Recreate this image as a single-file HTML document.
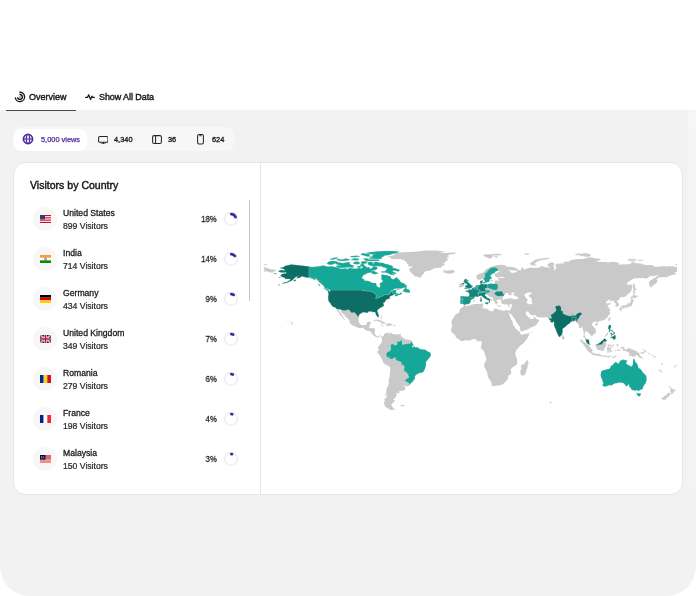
<!DOCTYPE html>
<html lang="en">
<head>
<meta charset="utf-8">
<title>Visitors by Country</title>
<style>
*{box-sizing:border-box;margin:0;padding:0}
html,body{width:696px;height:596px;overflow:hidden;background:#fff}
body{font-family:"Liberation Sans",sans-serif;color:#1c1c1e;position:relative}
.abs{position:absolute}
.tab,.ptxt,.title,.cname,.cvis,.pct{will-change:transform}
.tab{position:absolute;top:91.2px;height:12px;line-height:12px;font-size:9px;white-space:nowrap;color:#18181b;-webkit-text-stroke:0.4px #18181b}
.uline{position:absolute;left:6px;top:109.6px;width:70px;height:1.1px;background:#4a4a4c;z-index:3}
.page{position:absolute;left:0;top:110px;width:696px;height:486px;background:#f2f2f2;border-radius:0 0 30px 30px}
.pills{position:absolute;left:12.5px;top:127.3px;width:221.5px;height:24.2px;background:#f7f7f7;border-radius:8px}
.pill1{position:absolute;left:14px;top:128.5px;width:73px;height:22.5px;background:#fff;border-radius:7px}
.ptxt{position:absolute;top:133.6px;height:12px;line-height:12px;font-size:7.4px;white-space:nowrap;color:#202024;-webkit-text-stroke:0.34px #202024}
.card{position:absolute;left:13.4px;top:162.2px;width:669.2px;height:332.8px;background:#fff;border:1px solid #e6e6e6;border-radius:13px}
.divider{position:absolute;left:260px;top:163px;width:1px;height:331px;background:#e6e6e6}
.title{position:absolute;left:30px;top:178.2px;height:14px;line-height:14px;font-size:10.55px;white-space:nowrap;color:#17171a;-webkit-text-stroke:0.42px #17171a}
.row{position:absolute;left:0;width:260px;height:40px}
.flagc{position:absolute;left:33px;top:8px;width:24px;height:24px;border-radius:50%;background:#f7f7f7}
.flag{position:absolute;left:40px;top:16px;width:11px;height:8px;overflow:hidden}
.cname{position:absolute;left:63px;top:8.7px;height:11px;line-height:11px;font-size:8.65px;white-space:nowrap;color:#1b1b1f;-webkit-text-stroke:0.3px #1b1b1f}
.cvis{position:absolute;left:63px;top:21.8px;height:11px;line-height:11px;font-size:8.65px;white-space:nowrap;color:#2a2a2e;-webkit-text-stroke:0.24px #2a2a2e}
.pct{position:absolute;right:43.4px;top:14.9px;height:11px;line-height:11px;font-size:8.9px;white-space:nowrap;color:#1b1b1f;text-align:right;-webkit-text-stroke:0.3px #1b1b1f;transform:scaleX(.88);transform-origin:100% 50%}
.donut{position:absolute;left:222.9px;top:12.2px;width:16px;height:16px}
.scroll{position:absolute;left:248.8px;top:200px;width:1.4px;height:101px;background:#c4c4c4;border-radius:1px}
</style>
</head>
<body>
<!-- tabs -->
<svg class="abs" style="left:14.1px;top:90.8px" width="11.8" height="11.8" viewBox="0 0 24 24" fill="none" stroke="#18181b" stroke-width="2.8" stroke-linecap="round"><path d="M12 2.5a9.5 9.5 0 1 1-9.3 11.4"/><path d="M12 7a5 5 0 1 1-4.6 7"/><circle cx="12" cy="12" r="1.3" fill="#18181b" stroke="none"/></svg>
<div class="tab" style="left:29.2px">Overview</div>
<svg class="abs" style="left:84.6px;top:92px" width="10" height="10" viewBox="0 0 22 22" fill="none" stroke="#18181b" stroke-width="2.7" stroke-linecap="round" stroke-linejoin="round"><path d="M1.5 12h4l2.6-6 4.2 10.5 2.8-7.5 1.6 3h3.8"/></svg>
<div class="tab" style="left:98.6px;letter-spacing:-0.08px">Show All Data</div>
<div class="uline"></div>

<div class="page"></div>
<div class="abs" style="left:688px;top:110px;width:8px;height:450px;background:linear-gradient(#f6f6f6,#f4f4f4 60%,#f2f2f2)"></div>
<div class="pills"></div>
<div class="pill1"></div>

<svg class="abs" style="left:21.7px;top:133.3px" width="12" height="12" viewBox="0 0 24 24" fill="none" stroke="#4b2a9b" stroke-width="3.2"><circle cx="12" cy="12" r="9.2" fill="#e7e0f7"/><ellipse cx="12" cy="12" rx="3.6" ry="9.2" stroke-width="2"/><path d="M2.5 12h19" stroke-width="2"/></svg>
<svg class="abs" style="left:97.6px;top:135.5px" width="10.6" height="8.6" viewBox="0 0 21.2 17.2" fill="none" stroke="#26262a" stroke-width="2.1" stroke-linecap="round" stroke-linejoin="round"><rect x="1.2" y="1.2" width="18.8" height="11.4" rx="2.6"/><path d="M6.2 15.9h8.8M10.6 12.8v3"/></svg>
<svg class="abs" style="left:151.6px;top:135.2px" width="10" height="9" viewBox="0 0 20 18" fill="none" stroke="#26262a" stroke-width="2.1" stroke-linecap="round" stroke-linejoin="round"><rect x="1.2" y="1.2" width="17.6" height="15.6" rx="3"/><path d="M7.2 1.2v15.6"/></svg>
<svg class="abs" style="left:196.8px;top:134.3px" width="7" height="10.6" viewBox="0 0 14 21.2" fill="none" stroke="#26262a" stroke-width="2.1" stroke-linecap="round" stroke-linejoin="round"><rect x="1.2" y="1.2" width="11.6" height="18.8" rx="2.8"/><path d="M5.5 3.6h3"/></svg>

<div class="ptxt" style="left:40.5px;color:#4c2a9c;-webkit-text-stroke:0.25px #4c2a9c">5,000 views</div>
<div class="ptxt" style="left:114px">4,340</div>
<div class="ptxt" style="left:168px">36</div>
<div class="ptxt" style="left:211.8px">624</div>

<div class="card"></div>
<div class="divider"></div>
<div class="title">Visitors by Country</div>
<div class="scroll"></div>
<div class="row" style="top:199px"><div class="flagc"></div><svg class="flag" viewBox="0 0 11 8"><rect width="11" height="8" fill="#fff"/><g fill="#c8102e"><rect y="0" width="11" height="1.15"/><rect y="2.28" width="11" height="1.15"/><rect y="4.57" width="11" height="1.15"/><rect y="6.85" width="11" height="1.15"/></g><rect width="5" height="4.4" fill="#3c3b6e"/></svg><div class="cname">United States</div><div class="cvis">899 Visitors</div><div class="pct">18%</div><svg class="donut" viewBox="0 0 16 16"><circle cx="8" cy="8" r="6.4" fill="none" stroke="#efeef4" stroke-width="1.6"/><circle cx="8" cy="8" r="4.9" fill="none" stroke="#4b2a9b" stroke-width="2.8" stroke-linecap="round" stroke-dasharray="5.24 30.79" transform="rotate(-86 8 8)"/></svg></div>
<div class="row" style="top:239px"><div class="flagc"></div><svg class="flag" viewBox="0 0 11 8"><rect width="11" height="8" fill="#fff"/><rect width="11" height="2.67" fill="#ff9933"/><rect y="5.33" width="11" height="2.67" fill="#138808"/><circle cx="5.5" cy="4" r="1" fill="none" stroke="#000088" stroke-width=".5"/></svg><div class="cname">India</div><div class="cvis">714 Visitors</div><div class="pct">14%</div><svg class="donut" viewBox="0 0 16 16"><circle cx="8" cy="8" r="6.4" fill="none" stroke="#efeef4" stroke-width="1.6"/><circle cx="8" cy="8" r="4.9" fill="none" stroke="#4b2a9b" stroke-width="2.8" stroke-linecap="round" stroke-dasharray="4.01 30.79" transform="rotate(-86 8 8)"/></svg></div>
<div class="row" style="top:279px"><div class="flagc"></div><svg class="flag" viewBox="0 0 11 8"><rect width="11" height="2.67" fill="#000"/><rect y="2.67" width="11" height="2.67" fill="#dd0000"/><rect y="5.33" width="11" height="2.67" fill="#ffce00"/></svg><div class="cname">Germany</div><div class="cvis">434 Visitors</div><div class="pct">9%</div><svg class="donut" viewBox="0 0 16 16"><circle cx="8" cy="8" r="6.4" fill="none" stroke="#efeef4" stroke-width="1.6"/><circle cx="8" cy="8" r="4.9" fill="none" stroke="#4b2a9b" stroke-width="2.8" stroke-linecap="round" stroke-dasharray="2.47 30.79" transform="rotate(-86 8 8)"/></svg></div>
<div class="row" style="top:319px"><div class="flagc"></div><svg class="flag" viewBox="0 0 11 8"><rect width="11" height="8" fill="#012169"/><path d="M0,0L11,8M11,0L0,8" stroke="#fff" stroke-width="1.6"/><path d="M0,0L11,8M11,0L0,8" stroke="#c8102e" stroke-width=".6"/><path d="M5.5,0V8M0,4H11" stroke="#fff" stroke-width="2.6"/><path d="M5.5,0V8M0,4H11" stroke="#c8102e" stroke-width="1.5"/></svg><div class="cname">United Kingdom</div><div class="cvis">349 Visitors</div><div class="pct">7%</div><svg class="donut" viewBox="0 0 16 16"><circle cx="8" cy="8" r="6.4" fill="none" stroke="#efeef4" stroke-width="1.6"/><circle cx="8" cy="8" r="4.9" fill="none" stroke="#4b2a9b" stroke-width="2.8" stroke-linecap="round" stroke-dasharray="1.86 30.79" transform="rotate(-86 8 8)"/></svg></div>
<div class="row" style="top:359px"><div class="flagc"></div><svg class="flag" viewBox="0 0 11 8"><rect width="3.67" height="8" fill="#002b7f"/><rect x="3.67" width="3.67" height="8" fill="#fcd116"/><rect x="7.33" width="3.67" height="8" fill="#ce1126"/></svg><div class="cname">Romania</div><div class="cvis">279 Visitors</div><div class="pct">6%</div><svg class="donut" viewBox="0 0 16 16"><circle cx="8" cy="8" r="6.4" fill="none" stroke="#efeef4" stroke-width="1.6"/><circle cx="8" cy="8" r="4.9" fill="none" stroke="#4b2a9b" stroke-width="2.8" stroke-linecap="round" stroke-dasharray="1.55 30.79" transform="rotate(-86 8 8)"/></svg></div>
<div class="row" style="top:399px"><div class="flagc"></div><svg class="flag" viewBox="0 0 11 8"><rect width="3.67" height="8" fill="#002395"/><rect x="3.67" width="3.67" height="8" fill="#fff"/><rect x="7.33" width="3.67" height="8" fill="#ed2939"/></svg><div class="cname">France</div><div class="cvis">198 Visitors</div><div class="pct">4%</div><svg class="donut" viewBox="0 0 16 16"><circle cx="8" cy="8" r="6.4" fill="none" stroke="#efeef4" stroke-width="1.6"/><circle cx="8" cy="8" r="4.9" fill="none" stroke="#4b2a9b" stroke-width="2.8" stroke-linecap="round" stroke-dasharray="0.93 30.79" transform="rotate(-86 8 8)"/></svg></div>
<div class="row" style="top:439px"><div class="flagc"></div><svg class="flag" viewBox="0 0 11 8"><rect width="11" height="8" fill="#fff"/><g fill="#cc0001"><rect y="0" width="11" height=".6"/><rect y="1.14" width="11" height=".6"/><rect y="2.28" width="11" height=".6"/><rect y="3.42" width="11" height=".6"/><rect y="4.57" width="11" height=".6"/><rect y="5.71" width="11" height=".6"/><rect y="6.85" width="11" height=".6"/></g><rect width="5.5" height="4.55" fill="#010066"/><circle cx="2.4" cy="2.3" r="1.3" fill="#fc0"/><circle cx="2.85" cy="2.3" r="1.1" fill="#010066"/><circle cx="3.9" cy="2.3" r=".6" fill="#fc0"/></svg><div class="cname">Malaysia</div><div class="cvis">150 Visitors</div><div class="pct">3%</div><svg class="donut" viewBox="0 0 16 16"><circle cx="8" cy="8" r="6.4" fill="none" stroke="#efeef4" stroke-width="1.6"/><circle cx="8" cy="8" r="4.9" fill="none" stroke="#4b2a9b" stroke-width="2.8" stroke-linecap="round" stroke-dasharray="0.62 30.79" transform="rotate(-86 8 8)"/></svg></div>
<svg class="abs" style="left:261px;top:163px" width="421" height="331" viewBox="261 163 421 331"><path fill="#c9c9c9" d="M311.9,267.0 315.3,266.7 318.2,266.6 320.5,266.1 323.3,265.5 324.5,265.7 326.8,266.6 328.5,266.7 329.6,266.3 332.5,266.6 336.5,267.2 338.8,267.4 340.0,268.1 338.8,268.5 342.3,268.7 345.1,268.6 346.8,268.1 346.3,269.1 347.4,269.6 348.0,268.6 350.3,268.1 352.6,268.5 354.9,268.7 357.7,268.6 358.9,267.8 360.6,268.1 360.6,269.1 361.4,268.3 362.9,267.4 362.3,266.6 360.0,265.7 360.6,264.6 362.1,263.8 364.0,264.3 364.6,266.1 366.3,266.6 366.9,267.8 368.0,267.0 369.8,267.5 369.8,268.9 371.5,268.6 372.6,267.2 372.9,266.3 376.1,266.4 377.2,267.2 377.2,268.3 376.6,269.5 374.9,270.3 373.2,270.1 372.1,270.6 371.9,271.1 373.2,270.6 374.4,271.2 376.6,272.4 378.6,272.9 377.8,273.5 375.5,274.3 372.6,273.8 370.7,272.9 372.3,272.0 371.7,271.4 371.5,272.0 369.8,272.7 367.5,272.9 366.6,273.7 364.6,274.5 362.9,275.8 362.1,277.3 362.3,278.8 364.0,279.1 364.6,280.7 366.9,280.8 369.2,281.3 370.9,282.2 373.2,282.9 376.1,283.0 376.4,284.4 376.4,285.7 377.4,286.5 378.4,287.5 379.5,287.4 380.3,286.3 380.1,284.4 379.3,283.5 381.8,282.6 382.8,281.2 382.4,279.8 380.8,278.9 381.8,277.5 381.2,275.8 381.7,274.6 384.7,274.9 387.0,275.2 388.7,276.0 390.7,276.4 391.0,278.1 392.1,279.2 394.4,279.0 396.1,277.6 396.6,277.1 397.9,278.7 399.6,280.0 400.1,281.5 401.9,282.7 404.2,283.6 405.3,284.7 406.7,285.3 406.7,286.7 405.3,287.4 403.2,287.8 401.9,288.6 399.6,288.6 396.7,288.6 394.4,288.8 393.5,289.7 391.5,290.6 390.1,292.1 389.5,292.5 390.7,291.6 392.7,290.6 394.4,290.0 396.1,289.9 396.9,290.5 395.8,291.3 396.1,292.2 396.4,293.2 397.9,293.7 399.8,293.8 400.7,292.4 401.6,292.8 402.0,293.7 400.7,294.4 398.4,295.1 396.7,295.9 395.6,296.3 394.8,295.9 395.2,295.2 396.7,294.4 395.0,294.5 393.8,294.8 392.1,295.5 390.4,296.1 389.6,297.1 389.5,297.8 390.2,298.2 389.7,298.6 388.7,298.8 387.0,299.2 388.1,299.3 385.8,299.8 385.7,300.9 384.7,301.7 384.4,302.4 383.5,303.7 383.2,302.2 383.0,303.3 383.5,304.0 383.9,305.5 383.0,306.4 381.6,307.2 380.3,307.7 379.5,308.5 378.0,309.4 377.4,310.4 377.3,311.3 377.8,312.7 378.4,313.9 378.8,315.6 378.7,317.0 378.0,317.4 377.4,316.7 376.8,315.8 375.8,314.5 375.8,313.2 374.9,312.1 374.0,311.9 372.9,312.3 371.7,311.4 370.0,311.6 368.6,311.6 367.7,311.9 368.3,312.9 366.9,312.8 365.8,312.5 364.0,312.3 362.3,312.5 361.4,313.2 360.0,313.9 359.1,314.8 359.1,316.3 359.2,316.6 358.8,318.2 358.5,320.2 358.6,321.3 359.2,322.7 360.0,323.9 360.7,324.7 362.0,325.3 363.1,325.2 364.6,325.0 365.8,325.1 366.6,324.2 366.9,322.7 367.2,322.1 369.2,321.7 370.7,321.7 371.1,322.0 370.5,323.1 370.2,324.3 369.8,325.1 369.5,326.1 369.4,327.4 368.8,328.1 369.8,328.3 371.1,328.2 372.3,328.1 373.7,328.2 374.9,328.8 375.3,329.2 375.0,330.3 374.8,331.6 374.7,332.8 374.7,333.8 375.3,334.6 376.0,335.4 376.6,335.9 377.4,336.2 378.4,335.9 379.3,335.4 380.3,335.5 381.2,335.8 381.9,336.3 382.6,337.1 383.2,336.1 383.9,335.2 384.1,334.0 384.9,333.6 385.8,333.3 387.0,333.0 387.9,332.4 388.7,332.1 389.0,332.5 388.2,333.1 388.6,333.8 388.9,334.6 389.3,333.7 390.2,333.1 390.4,332.3 391.0,333.1 392.4,333.7 392.7,334.3 394.6,334.1 396.1,334.7 397.3,334.4 398.7,334.0 399.7,334.0 399.0,334.6 400.1,335.1 400.9,335.6 401.3,336.6 402.4,336.9 403.6,337.9 404.7,339.1 405.9,339.5 407.6,339.4 408.7,339.7 410.0,340.1 411.3,341.1 412.0,341.7 412.5,343.7 413.3,344.4 413.3,345.4 412.5,346.1 411.8,346.8 412.8,347.4 413.9,346.5 415.0,346.6 415.2,347.8 415.9,347.0 417.3,347.4 419.1,348.0 419.6,348.9 419.9,349.6 420.8,349.1 422.5,349.5 424.2,349.5 425.4,350.0 426.5,350.5 427.9,351.7 428.8,352.1 430.1,352.3 430.5,353.5 430.8,354.7 430.5,356.4 429.6,357.5 428.5,358.7 427.7,359.8 426.7,361.1 425.9,362.1 425.9,363.5 425.9,365.2 425.6,366.7 425.1,367.9 424.8,369.2 423.9,370.7 423.6,371.5 422.5,372.6 421.0,372.7 419.5,373.0 418.6,373.6 417.5,373.9 415.9,375.0 415.0,375.9 414.9,377.3 414.8,378.9 413.8,379.9 413.0,381.3 411.8,382.6 410.8,383.3 410.1,384.4 409.4,385.0 408.7,385.9 407.6,386.3 406.2,386.3 405.1,385.9 403.8,385.3 403.7,385.9 405.0,386.8 405.0,387.8 405.6,388.3 404.6,390.0 403.0,390.7 400.7,391.0 399.3,390.9 399.3,392.2 399.0,393.2 397.5,393.5 396.1,393.1 396.0,394.1 397.3,394.9 397.5,395.5 396.4,395.6 395.8,397.0 395.4,397.9 394.1,398.2 393.3,399.1 394.1,400.2 395.1,400.5 394.4,401.6 392.9,403.0 391.8,404.0 391.3,404.8 392.0,406.1 392.4,406.4 392.4,407.1 393.0,408.0 394.4,408.8 395.9,409.0 394.4,409.6 392.4,409.9 390.4,409.7 388.7,408.8 387.5,408.0 385.5,407.1 384.9,406.1 384.4,404.8 384.1,403.0 384.1,401.7 385.1,401.1 384.0,399.8 384.9,398.8 386.0,397.7 387.0,396.7 387.2,395.4 387.0,394.2 386.0,393.8 386.2,391.9 386.5,390.4 386.3,388.9 387.0,388.1 387.4,386.8 388.1,385.6 388.5,384.4 388.7,382.4 388.7,380.7 388.8,379.2 389.4,377.8 389.7,376.1 389.8,374.4 389.8,372.7 390.2,370.9 390.3,369.2 390.1,367.4 389.3,366.5 388.1,365.8 386.4,365.0 384.7,364.1 383.5,362.9 383.2,361.9 382.4,360.4 381.7,359.1 381.0,357.8 380.4,356.4 379.5,355.1 378.9,354.1 377.7,353.2 377.4,351.8 378.0,350.9 378.6,350.2 379.2,349.3 378.3,349.1 377.8,348.4 378.1,347.4 378.7,346.4 378.9,345.4 380.1,344.8 380.4,344.0 381.0,343.3 381.8,342.4 382.1,341.7 381.8,340.3 381.9,339.1 381.5,338.0 381.6,337.5 381.5,337.6 381.0,336.8 380.5,336.3 379.7,336.0 379.3,336.4 378.6,336.9 378.9,337.7 378.3,337.9 377.7,337.4 377.0,337.0 375.7,336.8 375.5,336.9 374.8,336.3 373.5,335.2 373.2,334.8 372.4,335.0 372.3,333.8 371.5,332.9 370.3,331.5 370.0,331.1 369.0,331.2 367.7,330.7 366.3,330.4 365.0,329.7 363.5,328.3 362.3,327.7 361.2,328.1 359.7,328.3 357.7,327.6 356.2,327.0 354.3,326.1 352.6,325.4 351.4,324.5 350.0,323.6 349.6,322.9 349.9,322.0 349.4,320.4 348.2,319.1 346.8,317.6 345.5,316.7 345.1,315.6 344.0,314.8 343.2,314.2 342.0,313.1 341.3,311.7 340.9,310.5 339.7,310.1 339.0,309.8 339.2,311.0 340.0,312.1 341.1,313.6 341.7,314.8 342.6,315.9 343.2,317.1 343.7,318.2 344.3,318.8 345.1,319.5 344.7,320.0 344.1,319.4 342.8,318.3 342.0,317.6 342.0,316.5 340.8,315.7 339.6,315.1 338.8,314.4 339.7,314.0 339.7,313.2 338.2,312.1 337.7,311.0 336.9,310.1 336.4,309.0 335.9,308.0 334.8,307.3 333.7,307.0 332.5,306.7 332.3,305.9 331.0,304.7 330.8,303.9 330.2,303.1 329.6,302.4 328.7,301.2 328.2,300.1 328.4,298.7 328.0,297.2 328.4,295.9 328.5,293.3 327.8,291.8 327.7,290.8 329.1,291.0 330.1,291.8 330.3,290.9 329.9,290.1 329.3,289.7 327.9,289.0 326.2,288.3 324.5,287.8 324.1,286.5 323.0,285.3 321.6,284.2 321.0,283.2 319.6,282.7 319.3,281.5 317.8,280.6 317.0,279.5 315.5,278.3 315.3,279.4 314.2,279.6 312.7,279.0 310.7,278.0 308.4,277.5 306.1,277.4 304.4,277.1 302.7,276.5 301.0,276.5 300.6,277.5 299.3,277.7 297.5,278.3 296.6,278.2 297.1,276.9 298.7,276.1 297.0,276.4 295.5,277.2 294.3,278.2 293.9,279.0 292.4,280.0 291.2,281.0 289.5,281.6 287.8,282.4 285.9,283.0 284.0,283.5 281.8,283.8 283.2,283.1 284.9,282.3 286.7,282.1 288.4,281.0 289.7,280.3 290.3,279.0 288.9,278.9 287.2,279.0 285.2,279.0 284.9,277.7 283.2,277.5 281.5,276.6 280.3,275.6 281.5,274.4 282.1,274.0 284.4,273.5 286.1,273.4 286.3,272.2 284.4,272.4 282.1,272.4 280.0,272.2 278.1,271.1 279.8,270.4 282.1,270.1 283.2,270.4 285.2,270.3 284.4,269.5 282.6,268.8 280.9,268.2 279.4,268.0 283.2,267.2 285.5,265.7 291.2,264.6 296.4,265.1 301.0,265.6 305.6,266.1 309.0,266.5ZM329.6,264.8 327.3,263.9 326.8,263.5 328.5,261.8 331.4,260.9 335.9,261.2 338.5,262.3 337.5,262.6 340.0,262.5 342.3,263.2 344.5,262.7 348.0,262.3 350.3,262.6 349.7,263.8 350.9,264.7 354.3,265.8 353.1,266.6 354.3,267.2 351.4,267.5 348.6,267.2 345.7,267.5 340.5,267.8 337.7,267.2 336.5,266.4 335.9,265.8 338.8,265.5 341.1,265.7 337.1,264.6 335.1,263.3 334.8,263.4 332.5,264.4ZM474.1,304.0 476.4,304.1 478.1,303.8 479.8,304.0 481.9,303.5 482.5,303.8 483.4,303.9 482.8,304.7 482.8,305.5 483.3,306.2 482.3,307.0 482.3,307.6 483.4,308.2 484.8,308.7 485.9,308.6 487.8,309.2 488.6,310.2 490.7,310.9 492.4,311.6 493.3,311.0 493.6,309.6 495.3,308.6 497.0,308.9 498.2,309.6 499.5,310.1 501.6,310.3 503.8,310.9 505.0,310.4 506.2,310.1 507.3,310.3 508.0,310.6 509.9,310.4 510.4,309.6 510.8,308.5 511.3,307.4 511.8,306.2 511.7,305.0 512.1,304.2 511.3,304.3 510.3,304.1 509.3,304.8 507.9,304.9 506.4,304.2 505.6,304.1 505.0,304.8 503.9,304.6 503.0,304.1 502.1,303.9 501.8,302.9 500.9,302.4 501.4,301.6 500.7,301.0 500.8,300.4 501.8,300.0 503.3,300.0 504.1,299.6 504.1,299.2 505.4,299.1 506.8,299.0 507.9,298.4 509.1,298.2 510.8,298.2 511.9,298.6 513.1,299.1 514.8,299.3 516.5,299.3 518.0,298.8 518.3,297.9 517.9,297.0 516.5,296.5 515.4,295.9 514.2,295.3 513.4,294.9 513.4,294.4 514.2,293.6 513.9,292.9 515.0,292.3 515.6,292.2 514.4,292.2 513.1,292.5 511.7,293.0 510.8,293.3 511.1,294.1 512.5,294.3 511.7,294.7 510.8,294.9 509.6,295.4 509.1,295.2 508.8,294.5 508.0,294.3 509.1,293.7 507.9,293.5 507.1,292.9 506.0,293.0 505.0,293.8 504.6,294.5 503.9,295.1 503.6,295.9 503.3,296.4 502.6,297.2 502.4,297.8 502.7,298.3 503.3,298.8 503.8,299.1 503.0,299.3 501.9,299.4 501.1,300.0 500.7,300.1 500.6,299.5 499.3,299.4 498.2,299.5 498.4,300.2 497.7,300.3 497.2,300.0 496.7,299.9 496.7,300.7 497.0,301.2 496.8,301.7 497.6,302.0 498.2,302.5 498.2,303.1 497.4,302.7 497.1,303.3 496.9,304.0 497.1,304.5 496.4,304.5 496.1,303.9 495.5,304.1 495.1,303.2 495.3,302.5 494.8,302.3 494.5,301.7 493.9,301.1 493.6,300.7 492.9,300.0 492.9,298.8 492.9,298.3 492.1,297.7 491.1,297.1 489.9,296.5 488.8,296.2 488.1,295.5 487.6,294.7 487.0,294.4 486.6,294.9 486.2,294.5 486.4,293.9 485.6,293.9 484.8,294.4 484.9,295.3 485.1,295.9 486.1,296.3 486.7,297.5 487.6,298.0 488.8,298.3 489.2,298.4 489.0,298.8 490.1,299.3 491.3,299.8 491.9,300.3 491.6,300.7 491.1,300.1 490.1,299.9 489.7,300.7 490.3,301.6 489.7,302.0 489.1,302.9 488.6,302.7 488.9,302.0 489.2,301.5 488.8,300.4 487.8,300.2 487.2,299.8 486.7,299.5 485.6,299.1 484.8,298.5 483.9,297.8 482.8,297.1 482.5,296.4 482.1,295.9 481.0,295.4 479.9,296.0 479.2,296.1 478.2,296.8 477.0,296.8 475.8,296.5 474.7,296.7 474.1,297.1 474.3,297.7 474.3,298.3 473.2,299.0 471.8,299.3 471.3,299.8 470.6,300.6 470.3,301.1 470.9,301.8 470.1,302.4 469.8,303.2 468.8,303.7 468.1,304.2 466.6,304.2 465.6,304.2 464.5,304.9 463.4,304.3 462.7,303.7 461.7,303.9 460.4,303.9 460.7,302.5 459.9,301.9 460.1,301.0 460.6,299.9 460.7,298.7 460.4,297.8 460.0,297.0 461.2,296.2 462.6,296.3 464.3,296.3 466.1,296.5 467.4,296.5 468.6,296.5 469.2,295.5 469.4,294.1 469.2,293.3 468.2,292.5 467.8,292.0 466.6,291.6 465.5,291.4 465.3,290.8 466.6,290.4 467.8,290.6 468.8,290.5 468.6,289.3 469.3,289.6 470.4,289.8 470.9,289.4 472.1,288.9 472.5,288.1 473.5,287.7 474.4,287.4 475.2,286.8 475.8,286.2 476.2,285.5 477.0,285.2 477.9,285.0 478.8,285.0 479.8,284.9 480.4,284.5 480.9,284.4 480.6,283.5 480.1,282.7 480.1,281.5 480.2,281.0 481.5,280.7 482.7,280.2 482.6,281.2 483.0,281.8 482.3,282.1 482.0,282.7 482.9,282.7 483.0,283.1 482.1,283.2 481.9,282.8 481.9,282.9 481.9,283.5 483.0,284.1 483.3,284.4 484.4,284.2 485.6,283.9 486.9,284.5 487.8,284.3 489.2,284.1 490.7,283.5 491.9,283.6 492.2,283.9 493.1,283.9 493.6,283.4 494.7,283.0 494.7,282.1 494.7,281.2 495.4,280.4 496.6,280.2 497.4,281.0 498.4,280.8 498.6,279.6 497.6,279.1 497.6,278.4 499.1,278.1 501.0,278.0 502.7,278.1 503.9,277.5 505.3,277.6 503.9,277.1 502.7,276.9 501.0,277.1 499.3,277.3 497.0,277.6 496.1,277.1 495.2,276.6 495.2,275.5 495.0,274.5 495.9,273.5 497.6,272.6 499.0,271.9 499.8,271.6 499.5,271.1 498.4,270.9 497.0,270.9 495.9,271.2 495.1,272.1 494.2,273.2 492.4,273.8 491.3,274.6 490.6,275.5 490.4,276.6 491.3,277.2 492.2,277.9 491.3,278.7 489.9,279.2 489.7,280.4 489.2,281.5 488.8,282.0 487.3,282.1 486.9,282.7 485.6,282.8 485.1,281.9 484.8,281.0 484.2,280.0 483.5,278.9 483.3,278.4 482.8,278.1 482.1,278.7 481.2,279.0 480.1,279.7 478.7,279.8 477.3,279.0 476.7,278.1 476.5,276.9 476.4,275.8 477.0,275.0 478.4,274.3 480.2,273.6 481.9,273.3 483.0,272.4 484.4,271.4 485.3,270.3 486.7,269.1 487.8,268.3 489.2,267.7 490.7,267.0 492.4,266.3 494.2,265.9 495.9,265.6 497.6,265.1 499.9,264.8 502.2,264.9 503.9,265.1 506.2,265.6 505.0,266.3 506.8,266.4 508.5,266.7 510.8,266.9 513.1,267.3 515.9,268.1 517.7,269.0 517.9,269.8 516.5,270.4 514.6,270.5 511.9,270.3 510.2,269.9 508.3,269.5 509.1,270.4 510.4,271.2 510.4,272.2 511.9,272.7 513.4,273.0 514.0,272.4 515.9,272.2 517.1,272.2 516.5,271.4 516.8,270.6 519.0,270.1 520.9,270.4 521.4,269.9 520.9,269.1 521.1,268.3 520.5,267.7 522.2,267.7 523.4,268.3 524.0,269.5 522.8,269.6 525.1,269.6 526.3,268.7 528.5,268.1 531.4,267.4 532.6,268.0 534.3,267.7 536.6,267.7 538.9,267.7 540.0,267.0 540.4,266.3 543.4,266.6 545.2,267.0 547.5,267.4 549.2,268.0 549.8,267.3 548.0,266.5 547.5,265.5 547.5,264.3 549.2,263.2 550.3,262.6 552.6,262.4 554.1,263.0 554.1,264.3 553.4,265.7 554.1,267.2 554.9,268.1 553.2,269.7 554.3,270.1 556.1,268.9 556.4,267.4 555.5,266.1 555.3,264.7 556.6,263.5 558.3,263.8 560.1,263.5 562.9,263.5 565.2,264.0 563.5,262.8 562.9,261.9 565.8,261.8 569.2,261.6 570.4,260.3 573.8,259.6 577.3,259.2 580.7,259.1 584.1,258.7 586.4,258.0 589.9,257.2 592.2,257.6 594.5,258.3 598.5,258.4 600.8,259.2 600.2,260.1 596.8,261.2 596.8,261.8 600.2,261.7 601.9,262.0 606.5,261.9 607.6,262.6 612.2,261.8 615.7,262.0 618.0,262.4 619.1,263.8 618.0,264.0 619.7,264.9 622.0,264.2 623.7,264.4 626.6,264.2 629.4,264.2 631.1,263.3 632.3,262.8 636.9,263.2 640.9,263.4 642.6,264.2 645.5,265.0 649.5,264.9 652.9,265.2 654.1,266.4 655.8,266.7 658.7,266.4 661.5,266.6 663.2,266.1 665.5,266.2 666.2,267.4 666.7,266.3 669.6,266.3 672.4,266.2 675.3,266.7 677.0,267.3 677.0,271.7 675.5,272.2 674.1,272.1 675.3,272.9 675.6,273.7 676.2,274.6 674.1,274.6 671.3,275.3 669.0,276.1 667.3,276.9 665.9,277.6 663.8,276.9 661.0,277.3 659.8,277.5 658.1,277.6 657.9,278.5 656.4,279.6 656.9,280.2 657.7,281.3 657.2,282.0 656.0,283.0 656.4,283.5 654.5,284.1 654.1,285.3 652.4,285.7 652.0,286.8 650.4,287.8 650.1,286.7 649.5,285.3 649.0,283.2 649.3,281.5 650.4,280.2 652.1,279.6 653.8,278.3 655.8,277.3 657.5,276.0 658.7,274.8 657.5,274.8 656.4,275.8 654.3,275.5 653.8,276.6 651.2,275.7 648.9,277.1 647.5,277.9 645.5,278.7 644.0,278.1 642.0,277.9 638.0,278.3 634.6,278.3 632.3,279.2 630.0,280.7 628.3,281.9 626.2,283.4 627.7,284.2 628.6,284.9 630.6,284.4 632.3,285.2 632.6,286.3 631.9,287.5 631.7,289.0 631.4,290.7 630.0,292.2 629.1,293.2 627.5,294.5 626.0,295.9 624.3,297.0 622.9,297.2 622.0,296.8 620.8,297.3 620.3,297.8 619.5,298.7 619.3,299.5 618.0,300.4 616.8,300.8 616.7,301.4 617.7,302.2 618.8,303.5 619.0,305.0 618.8,305.9 617.6,306.3 616.2,306.7 615.4,306.6 615.7,305.3 615.7,304.1 616.0,303.3 614.5,303.0 614.0,302.5 614.3,301.0 613.1,300.6 611.7,300.9 610.5,301.6 609.7,301.7 610.2,300.8 610.7,299.9 609.9,299.4 608.8,300.1 607.6,300.7 606.5,301.5 605.6,302.0 606.5,302.9 607.1,303.5 608.2,303.4 609.4,303.1 611.0,303.4 611.0,304.0 609.4,304.5 608.4,305.0 607.4,305.9 607.4,306.6 608.6,307.3 609.1,308.6 610.3,309.8 610.3,310.9 609.0,311.6 610.3,312.0 610.1,313.3 609.7,314.0 608.8,315.1 607.9,316.3 607.5,317.3 606.5,318.1 605.4,319.1 604.2,319.9 602.8,320.3 601.6,320.7 600.5,320.8 599.0,321.4 597.7,321.8 597.1,322.9 596.5,322.8 596.5,321.8 595.4,321.4 594.2,321.7 593.1,322.5 592.2,323.6 591.8,324.6 592.6,325.9 593.7,327.0 594.8,328.0 595.6,329.1 596.0,330.8 595.8,332.5 595.4,333.3 594.2,334.0 593.1,334.4 592.9,335.4 591.6,336.0 590.8,336.4 591.0,335.1 590.3,334.4 589.3,334.1 588.7,333.1 588.2,332.3 587.2,331.7 586.3,331.7 586.3,330.8 585.5,330.8 585.2,332.0 584.7,333.7 584.4,334.8 584.5,335.6 585.3,336.6 585.6,337.7 586.2,338.4 587.2,338.6 588.0,339.3 588.8,340.1 589.2,341.1 589.2,342.4 589.4,343.3 590.0,344.4 590.0,344.7 589.3,344.8 588.2,344.0 586.9,343.1 586.3,341.9 586.0,341.0 585.6,340.0 585.5,339.0 584.9,338.5 584.5,337.8 583.6,337.2 583.2,336.6 583.6,335.1 583.8,333.9 583.8,332.5 583.3,331.2 583.1,330.3 582.7,328.8 582.5,327.4 581.9,326.8 581.3,327.4 580.0,328.2 579.0,328.1 578.8,327.0 579.0,325.9 578.8,324.7 578.0,323.9 577.3,323.1 576.6,322.6 576.1,321.7 575.9,320.6 575.0,320.4 574.4,320.7 573.8,321.2 572.7,321.3 571.9,321.5 570.6,321.7 570.3,322.5 569.8,323.4 568.4,323.9 567.3,325.1 566.1,326.1 565.0,327.2 563.9,327.8 563.0,328.3 562.5,329.3 562.6,330.8 562.7,332.0 562.2,333.1 562.2,334.5 561.4,334.8 561.2,335.6 560.5,336.0 560.1,336.7 559.5,337.0 558.7,336.3 558.1,335.2 557.5,333.7 556.9,332.5 556.4,331.4 555.9,329.9 555.4,328.5 554.8,327.4 554.3,325.9 554.1,324.4 554.1,323.0 554.0,322.0 553.6,321.3 553.4,322.1 552.3,322.5 551.2,322.2 550.1,321.3 549.8,320.7 551.1,320.4 551.2,319.9 550.0,320.2 549.2,319.6 548.8,319.1 548.0,318.9 547.6,318.0 546.8,317.1 545.2,317.3 543.4,317.4 541.7,317.5 540.6,317.4 538.9,317.2 537.1,317.1 536.2,316.5 535.8,315.3 535.1,315.0 533.7,315.3 532.6,315.5 531.4,315.1 530.3,314.3 529.3,313.6 528.9,312.5 528.0,311.4 526.8,311.2 526.4,312.0 525.7,312.1 525.7,312.9 526.0,314.0 526.5,314.9 527.4,315.7 527.9,316.4 527.9,317.2 528.5,318.0 528.9,317.1 529.3,316.5 529.8,317.2 529.6,318.2 529.9,319.0 531.2,318.9 532.6,319.0 533.7,318.1 534.6,317.2 535.2,316.4 535.3,317.1 535.4,318.1 536.3,318.9 537.8,319.2 538.9,320.3 539.2,320.6 538.6,321.8 537.8,322.8 536.9,323.4 536.8,324.5 535.8,325.0 535.2,325.8 533.9,326.2 533.1,326.8 531.8,327.2 530.5,327.6 529.5,328.5 527.7,329.0 526.6,329.9 525.4,330.3 524.1,330.6 522.8,331.1 522.0,331.4 520.9,331.5 520.5,330.9 520.2,329.6 520.1,328.5 520.1,327.4 519.5,326.5 518.7,325.3 517.9,324.2 517.0,323.1 516.0,322.0 515.8,320.7 515.1,319.4 514.1,318.3 513.5,317.3 512.6,315.9 511.7,314.7 510.8,313.9 510.7,312.6 510.7,312.5 510.2,314.1 509.9,314.4 509.1,313.6 508.1,312.1 507.8,312.3 508.3,313.4 509.2,314.4 509.6,315.6 510.3,317.0 510.8,318.6 511.0,319.5 512.3,320.8 512.7,322.2 512.8,323.8 513.2,325.0 514.2,325.7 514.9,327.4 515.5,328.6 516.6,329.3 517.8,330.4 519.0,331.4 519.9,332.1 520.1,333.2 521.3,334.5 522.2,334.6 524.0,334.3 525.4,333.8 526.8,333.7 528.3,333.2 529.3,332.8 529.2,334.1 528.8,335.6 528.0,337.1 527.1,338.8 525.7,340.6 524.5,342.1 523.4,343.4 521.7,344.6 520.2,345.8 518.8,347.2 517.9,348.4 516.8,349.3 516.3,350.7 515.7,351.8 515.1,353.2 515.8,354.2 515.7,355.8 516.2,357.4 517.0,358.5 517.1,360.6 517.3,362.7 517.1,364.1 516.3,365.1 514.8,366.0 513.1,366.8 512.1,367.9 510.8,369.0 510.4,369.9 511.1,370.9 511.3,372.4 511.2,373.8 510.2,374.7 508.5,375.4 508.1,376.1 508.3,377.5 507.8,379.1 506.8,380.1 505.8,381.4 504.8,382.5 503.4,383.7 502.2,384.6 500.8,385.0 499.9,385.4 498.2,385.4 496.4,385.4 494.7,385.9 493.6,386.2 492.4,385.7 491.7,385.5 491.6,384.1 491.5,382.8 490.6,381.3 489.9,379.8 489.3,379.0 488.4,377.8 487.8,376.5 487.6,375.0 487.2,373.2 487.3,371.9 486.2,370.4 485.3,368.7 484.3,366.9 484.1,365.8 484.2,364.6 484.6,363.3 485.3,361.5 486.2,360.4 486.5,358.9 485.9,357.5 485.6,356.3 485.0,354.7 484.6,353.2 484.5,352.3 483.8,351.1 482.9,350.2 481.8,349.2 481.0,347.8 480.7,347.1 481.3,346.0 481.7,344.9 481.5,343.7 481.9,342.6 481.7,341.8 480.7,341.1 479.8,341.1 478.7,341.3 477.5,341.4 476.7,340.3 475.7,339.2 474.3,339.0 472.9,339.1 471.6,339.7 470.1,340.2 468.4,340.8 467.2,340.5 465.5,340.3 463.8,340.7 462.1,341.3 460.9,340.8 459.8,339.9 458.3,339.0 457.5,338.3 456.3,337.7 455.5,336.6 455.4,335.5 454.3,334.6 453.5,333.8 452.5,332.9 451.5,332.1 451.4,331.1 450.9,329.6 451.4,328.5 451.8,327.4 452.2,325.9 452.1,324.5 451.7,323.4 451.2,322.2 452.0,320.5 452.5,319.0 453.7,317.4 454.1,316.3 455.5,314.7 456.3,314.2 458.0,313.3 459.0,312.6 459.5,311.7 459.4,310.5 460.0,309.2 460.9,308.1 462.6,307.4 463.4,306.4 463.9,305.3 464.6,305.1 466.1,305.9 467.8,305.9 469.5,305.4 470.9,305.0 472.4,304.5ZM527.7,299.5 528.3,300.0 527.4,300.1 527.2,301.0 526.7,302.0 526.8,303.2 528.0,303.5 529.1,304.2 530.8,304.2 532.4,304.0 532.3,303.2 531.8,301.6 531.4,300.4 532.3,299.4 531.1,298.7 530.8,297.5 529.3,296.7 528.3,295.4 529.1,295.3 529.5,294.5 530.8,294.3 531.6,293.6 531.4,292.6 529.7,292.4 528.0,292.6 526.3,293.2 524.9,294.1 524.2,294.9 524.5,295.3 525.1,296.1 525.4,297.2 526.4,298.3 527.1,298.7ZM394.4,273.8 392.1,273.3 395.0,275.2 392.1,274.9 388.7,273.8 387.0,272.7 384.7,272.5 381.5,272.5 381.2,271.4 385.2,271.2 386.0,270.1 387.2,268.7 385.2,267.8 383.0,267.2 381.2,266.3 379.5,266.2 376.1,266.1 373.4,266.1 370.9,265.7 368.6,264.9 367.7,263.8 368.3,262.2 370.3,261.7 373.2,262.2 372.6,263.8 373.8,264.3 373.2,262.8 376.1,261.8 378.4,262.4 381.2,262.7 383.5,263.1 385.2,263.9 388.1,264.3 389.3,265.1 392.1,265.7 393.3,266.9 392.1,267.7 395.0,268.3 397.9,269.3 400.1,269.9 398.4,271.6 396.1,270.9 393.3,270.3 392.7,271.4 395.6,272.7 396.4,274.1ZM420.2,251.1 427.1,250.5 436.3,250.5 443.1,251.3 445.4,252.1 438.6,252.3 445.4,252.9 452.3,252.6 456.9,252.9 454.0,253.9 450.0,254.4 447.7,255.2 449.4,256.3 446.6,257.5 448.9,258.3 446.0,258.9 448.3,260.1 446.6,260.9 444.3,262.2 445.4,263.3 442.6,263.3 445.4,264.4 443.1,265.1 444.9,265.8 441.4,265.7 442.6,266.9 439.7,267.8 436.3,268.1 433.4,268.6 431.7,270.1 428.8,270.8 425.4,271.2 424.2,272.4 423.6,273.7 421.9,275.2 421.6,276.6 420.8,277.5 419.1,277.5 417.3,276.6 415.0,276.4 413.9,275.2 412.2,273.7 411.0,272.4 409.3,270.6 409.3,269.1 410.5,268.0 412.2,267.2 412.2,266.2 408.7,266.6 407.8,265.5 409.3,264.7 407.0,264.1 407.0,262.8 405.3,261.2 403.6,260.0 400.7,259.2 397.3,258.9 392.7,259.2 389.8,258.3 391.5,257.6 388.1,257.1 387.0,256.7 392.7,255.5 395.6,254.6 393.8,253.8 399.6,252.5 407.6,252.0 415.6,251.8ZM373.2,255.7 371.5,254.6 375.5,254.0 369.8,254.0 365.8,253.1 369.8,252.2 376.6,251.4 384.7,251.0 392.7,251.1 399.6,251.7 396.7,252.9 392.7,253.7 389.3,254.9 384.7,255.4 383.0,256.7 381.2,257.7 381.8,258.7 378.4,258.9 374.4,258.7 368.6,258.6 369.8,257.5 373.2,257.1 370.3,256.5ZM601.3,341.1 602.5,340.6 603.2,339.9 603.9,339.1 604.5,338.3 605.1,338.8 605.7,339.4 606.5,339.9 607.3,340.3 606.3,341.1 605.6,341.5 605.6,342.5 605.9,343.7 606.8,344.9 605.9,345.4 605.5,346.3 605.4,347.2 604.4,348.0 604.1,349.2 603.9,350.3 603.4,350.9 602.1,351.0 601.3,350.2 600.2,350.0 598.8,350.3 597.9,349.7 597.0,349.6 596.8,348.0 596.0,347.2 595.7,346.0 595.6,344.6 596.3,344.0 597.3,344.4 598.1,344.6 598.2,343.4 599.6,342.9 600.5,342.3ZM609.7,368.4 610.7,366.9 610.9,366.0 611.7,365.2 612.5,365.7 612.6,364.9 613.4,364.3 614.2,363.2 615.1,362.6 616.0,362.1 617.0,362.7 617.7,363.4 619.1,363.4 619.2,362.3 619.9,361.4 620.4,360.6 621.4,360.3 622.5,360.2 622.7,359.4 623.8,359.8 625.4,360.3 626.6,360.4 627.5,360.3 626.9,361.5 626.3,362.6 626.0,363.4 627.1,364.3 628.3,364.9 629.4,365.6 630.3,366.2 631.4,366.6 632.2,366.0 632.6,364.9 633.0,363.5 633.0,362.1 633.2,360.6 633.4,359.1 634.0,358.6 634.5,359.5 634.9,360.6 635.3,362.1 636.1,362.7 637.1,363.4 637.3,364.6 638.0,366.1 638.4,367.9 639.5,368.5 640.9,369.5 641.7,370.6 642.4,371.9 643.5,372.9 644.3,373.9 645.7,375.2 646.3,376.3 646.3,377.6 646.7,379.1 646.3,380.7 645.9,382.4 645.2,383.7 644.3,384.7 643.8,385.6 643.2,387.0 642.6,388.5 642.5,389.3 640.9,389.6 639.7,390.1 638.5,391.1 637.5,390.4 636.6,390.1 635.2,390.8 633.8,390.3 632.3,390.0 631.1,389.2 630.8,388.1 630.2,387.2 629.1,387.1 629.4,386.2 628.9,384.9 628.6,383.8 628.2,384.7 627.7,385.3 626.8,386.3 626.0,386.2 625.4,385.0 624.5,384.1 624.0,383.3 622.5,383.0 621.2,382.4 619.7,382.5 618.5,382.6 616.8,383.2 615.1,383.3 613.7,383.9 612.8,384.4 612.2,385.2 610.5,385.2 608.8,385.2 607.6,385.7 605.9,386.4 604.8,386.4 603.6,386.2 602.6,385.6 602.5,384.7 603.3,384.1 603.3,383.0 602.9,381.8 602.5,380.7 602.3,379.5 601.6,378.4 600.9,377.0 601.0,376.1 600.7,375.5 600.8,374.4 601.0,373.2 601.0,372.1 601.6,371.3 602.8,370.4 604.2,370.0 605.7,369.8 607.1,369.2 608.6,369.0ZM625.8,350.1 626.9,348.9 628.3,348.1 629.8,348.5 631.1,348.9 632.3,349.3 634.0,350.0 635.7,350.7 636.9,351.3 637.8,352.5 639.2,353.1 640.1,353.9 639.2,354.2 639.5,354.9 640.3,355.7 641.0,356.6 642.0,357.3 643.0,358.0 643.4,358.5 642.0,358.2 640.3,358.0 639.2,357.2 638.3,356.4 637.2,355.4 636.0,355.1 635.2,355.8 634.8,356.6 633.4,356.8 632.3,356.7 631.1,355.8 630.0,355.5 628.9,355.9 628.6,354.9 629.8,354.3 629.4,353.4 628.9,352.6 627.5,351.8 626.0,351.3 624.6,350.9 623.5,350.9 622.9,350.3 622.3,349.6 623.7,349.2 623.1,348.8 622.0,348.7 621.1,347.9 620.6,347.4 620.8,347.2 622.0,346.8 623.1,346.9 624.3,347.2 624.5,348.4 624.8,349.5Z"/><path fill="#c9c9c9" stroke="#c9c9c9" stroke-width=".4" stroke-linejoin="round" d="M292.7,323.3 293.2,323.9 292.3,324.6 291.7,324.1 291.7,323.0ZM291.8,322.3 291.5,322.8 290.9,322.1ZM289.9,321.7 289.6,322.0 289.3,321.5ZM383.8,322.2 385.5,323.0 384.7,323.5 382.4,323.5 381.6,323.5 382.1,322.7 380.7,322.2 379.2,321.4 377.2,320.8 376.1,320.4 374.6,321.0 373.3,321.2 374.4,320.3 375.7,319.8 377.4,319.7 378.9,320.0 380.7,320.6 382.1,321.4ZM288.0,321.0 287.8,321.2 287.6,320.8ZM380.9,318.4 380.9,317.4 381.5,317.4 381.5,318.6ZM381.2,315.8 381.5,315.5 382.4,315.9 382.1,316.4ZM323.6,288.1 325.6,288.4 327.3,288.9 329.1,290.5 329.0,290.9 327.3,290.5 325.3,289.4ZM319.0,285.5 318.2,284.3 319.6,284.4 320.2,286.3ZM277.8,285.3 278.1,284.9 280.0,284.4 279.8,285.0ZM294.3,281.2 293.4,280.4 295.7,279.6 296.2,280.5ZM279.0,277.7 278.9,277.3 280.6,277.2 280.6,277.7ZM274.0,274.0 273.8,273.5 276.9,273.7 277.1,274.1ZM274.6,271.2 272.9,271.4 272.6,272.5 270.6,272.2 268.9,272.0 267.2,271.3 265.7,271.1 264.9,271.4 264.3,271.7 264.3,267.3 266.6,268.0 268.9,268.8 270.6,269.4 273.5,269.6 275.2,270.3 276.1,270.5ZM360.6,266.2 361.2,267.2 359.4,267.7 356.6,267.0 358.3,266.1ZM264.3,265.0 264.3,264.3 266.6,264.4 267.2,264.8ZM353.1,263.5 353.7,262.6 354.9,261.8 358.3,261.7 359.7,262.6 359.4,264.1 356.0,264.3ZM360.9,263.4 361.2,261.8 364.0,261.2 367.5,261.6 366.9,263.0 363.5,263.9ZM343.4,260.9 340.0,260.8 336.5,260.1 337.7,258.9 342.3,259.7 345.7,258.6 349.1,259.2 349.7,260.1 346.8,260.5ZM368.6,259.6 373.2,259.5 378.4,259.5 379.5,260.3 378.9,260.8 374.4,260.9 369.8,260.9 365.8,260.7 364.6,259.4 362.9,258.6 367.5,258.5ZM358.3,258.6 358.9,260.0 356.0,260.3 350.9,260.0 353.7,258.6ZM337.7,257.5 337.1,258.6 333.1,259.4 329.6,259.2 334.2,257.7ZM360.0,256.5 354.9,257.2 350.9,257.1 350.3,256.3 357.2,255.7ZM369.2,255.4 370.3,256.2 367.5,256.5 364.0,255.5 360.6,254.6 362.3,253.2 366.3,253.8 370.3,254.4ZM402.4,405.1 404.4,405.3 403.6,406.1 401.5,406.3 400.5,405.6ZM385.4,395.8 385.8,394.3 386.4,394.7 386.2,395.9ZM399.8,334.7 399.8,333.9 400.7,333.9 400.7,334.7ZM383.2,325.6 382.4,325.9 381.0,325.6 380.9,325.2 382.4,325.1ZM393.6,325.7 393.6,325.1 395.3,325.2 395.2,325.7ZM391.5,324.3 392.2,325.0 391.0,325.2 389.8,325.4 388.8,326.0 387.8,325.4 386.4,325.4 385.4,325.1 386.6,325.0 387.2,324.4 386.7,323.5 388.5,323.5 390.4,323.7ZM498.7,305.5 500.8,305.8 500.5,306.2 499.0,306.3 497.6,305.9 497.6,305.5ZM485.6,303.4 484.9,303.1 485.0,302.7 486.1,302.5 487.8,302.5 488.5,302.5 488.1,303.5 488.0,304.2 487.0,304.1ZM474.1,301.2 473.4,300.9 474.3,300.6 474.5,301.0ZM480.1,299.5 481.2,299.0 481.8,299.5 481.8,301.0 481.2,301.5 480.4,301.7 480.3,301.0ZM390.2,298.2 390.4,298.0 390.4,298.4ZM481.5,298.2 481.2,298.8 480.6,298.5 480.5,297.7 481.4,297.0ZM407.0,289.1 408.7,289.6 409.7,290.6 410.1,292.1 409.3,292.9 408.2,292.2 406.7,292.5 404.7,291.7 402.7,291.6 403.6,290.1 404.7,288.4 406.2,287.1 406.9,287.4 405.9,289.0ZM397.1,289.4 396.7,289.1 399.6,289.7 399.0,290.0ZM459.3,285.0 459.2,284.1 461.0,283.9 461.1,283.2 462.2,282.9 463.2,283.0 464.0,283.2 464.2,283.9 463.5,284.6 463.7,285.5 463.3,286.5 462.1,286.6 460.9,287.0 459.4,287.3 458.8,286.6 459.6,286.0 460.3,285.3ZM465.0,286.7 465.9,286.2 465.6,285.7 465.6,285.2 467.1,285.1 467.3,284.6 467.0,283.8 466.3,283.4 464.9,283.4 465.1,282.6 464.2,282.8 464.3,282.1 463.5,281.5 464.1,281.3 464.0,280.5 464.5,279.9 464.9,279.1 467.1,279.0 467.0,279.2 465.8,280.3 466.6,280.2 468.6,280.3 468.1,281.0 467.6,281.6 467.0,282.1 468.2,282.2 468.8,282.7 469.3,283.6 470.4,284.2 470.9,285.0 471.2,285.5 472.6,285.9 472.5,286.5 471.5,287.3 472.3,287.6 471.0,288.1 469.5,288.2 467.8,288.3 466.6,288.5 465.5,288.6 464.1,288.9 465.1,288.3 465.7,287.6 466.8,287.6 467.2,287.3 465.8,287.1 464.7,286.9ZM484.4,282.0 485.1,282.3 484.8,283.1 483.8,283.4 483.3,283.0 483.3,282.4ZM491.5,281.0 491.5,279.9 492.4,279.9 492.2,280.6ZM451.2,270.5 452.3,270.1 453.7,270.6 454.9,271.6 454.0,272.4 452.3,272.9 450.0,273.5 448.3,273.5 446.6,273.0 444.7,273.0 445.4,272.4 443.4,271.9 445.1,271.7 444.9,271.2 442.9,271.2 444.3,270.2 445.4,270.5 446.2,271.2 447.5,270.8 449.4,270.5ZM495.3,257.3 495.3,256.3 497.6,256.5 497.0,257.5ZM501.6,254.5 499.3,255.2 495.9,255.2 493.2,254.8 491.9,255.4 494.7,256.0 492.4,256.3 492.2,257.2 490.1,258.4 487.8,257.8 486.5,256.9 483.8,256.1 483.3,255.2 486.1,254.6 490.1,254.6 492.4,254.5 491.9,254.2 495.9,254.0 499.3,254.1ZM551.1,403.3 549.6,403.0 549.5,402.2 551.5,402.5ZM525.9,371.9 525.1,373.8 524.5,375.0 522.8,375.5 521.4,375.0 520.7,373.6 520.3,371.9 520.7,370.4 521.6,369.0 521.3,367.5 521.1,365.8 522.0,364.9 523.6,364.4 524.8,363.3 525.7,362.1 526.6,361.0 527.2,360.1 528.0,361.8 528.4,363.8 527.6,364.4 527.5,365.8 527.2,367.5 526.6,369.6ZM609.1,357.8 608.2,358.1 607.3,357.5 607.1,357.2 608.2,357.0ZM613.4,358.0 612.2,358.1 613.1,357.1 614.2,356.4 615.7,355.9 616.6,355.9 616.0,356.6 614.5,357.3ZM605.9,356.5 604.8,356.6 603.6,356.5 602.7,356.4 602.5,355.6 603.3,355.7 604.2,355.8 605.4,355.8 606.3,355.8 607.1,355.9 607.1,356.4ZM608.1,355.8 609.4,355.9 610.5,355.9 611.7,355.7 611.4,356.3 609.9,356.5 608.2,356.4ZM599.6,354.2 600.2,354.9 601.9,355.2 601.9,356.3 600.2,355.8 598.5,355.8 596.8,355.5 595.0,355.1 593.9,355.0 592.6,354.8 591.3,354.1 592.2,353.1 593.3,353.2 594.8,353.6 596.2,354.1 597.3,354.2 597.9,353.8ZM616.5,350.4 615.4,350.7 615.1,350.0 616.2,349.9ZM614.0,345.2 613.1,345.8 612.0,346.0 610.5,345.7 609.1,345.7 608.3,346.5 608.4,347.3 609.4,347.9 609.9,347.3 611.1,347.2 612.1,347.3 611.7,347.8 610.9,348.1 610.1,348.5 610.9,349.7 611.4,350.9 611.7,351.5 611.2,352.5 610.5,351.8 609.9,351.5 609.4,350.3 609.2,349.4 608.7,349.6 608.7,350.9 608.7,352.6 607.6,352.6 607.6,351.5 607.6,350.3 606.8,349.5 607.3,348.6 607.4,347.7 608.0,346.5 608.0,345.4 608.4,344.8 609.4,344.8 610.5,345.2 611.9,345.3 613.1,344.9 614.2,344.4ZM587.0,344.2 588.2,345.2 589.1,345.7 589.6,346.6 590.3,347.7 590.7,348.6 591.6,349.2 592.2,350.0 592.1,351.5 592.1,352.9 591.3,352.9 590.4,352.7 589.3,351.9 587.9,350.9 586.9,349.6 586.2,348.6 585.6,347.2 584.8,346.3 584.1,345.5 583.7,344.4 582.8,343.5 582.1,342.6 581.0,341.8 580.1,340.8 579.9,339.9 581.3,340.3 582.4,340.3 583.3,341.5 584.1,342.3 585.3,343.1 586.2,343.8ZM615.3,335.6 615.7,337.1 615.6,338.3 615.3,339.1 614.6,339.4 614.4,338.5 614.3,339.8 613.1,339.2 612.8,338.3 612.2,337.5 611.4,337.7 610.7,338.4 610.5,338.3 610.7,337.4 611.7,336.6 612.5,336.4 613.1,336.6 613.7,336.0 614.5,335.1ZM562.1,338.3 562.1,336.9 562.2,335.2 562.9,335.5 563.7,336.6 564.4,337.7 564.3,338.8 563.3,339.4 562.5,339.3ZM605.0,336.7 605.6,335.9 606.7,334.6 607.4,333.3 607.8,333.3 607.1,334.5 605.9,335.8ZM612.8,334.5 612.2,335.3 612.1,334.3 612.8,333.5ZM611.2,334.3 610.5,334.1 610.5,332.8 611.4,333.1 611.9,333.1 611.9,333.9 612.1,335.1 611.9,335.9 611.1,335.3ZM613.8,333.0 613.1,332.0 614.3,332.0 614.8,333.3 614.2,334.3 614.2,334.6 613.7,334.6 613.3,333.3ZM531.9,332.2 531.8,331.9 533.1,331.9 532.9,332.2ZM609.9,331.7 609.5,332.2 609.0,331.7 608.7,330.9 609.6,330.9ZM610.9,330.0 611.7,330.3 612.6,330.5 612.9,331.4 612.8,331.9 612.0,331.4 611.4,330.7 610.5,330.5 609.4,330.6 609.0,330.4 609.2,329.6 608.6,329.3 608.2,328.2 608.3,327.7 608.7,326.2 608.9,325.1 609.9,325.0 610.7,325.1 610.9,326.5 611.1,327.4 610.1,328.2 610.2,329.3ZM595.3,324.2 596.2,323.4 597.4,323.3 597.9,323.8 597.3,324.9 596.3,325.4 595.3,325.1ZM608.3,319.2 609.0,318.1 609.9,317.3 610.5,317.9 610.1,319.0 609.4,320.5 609.0,321.1 608.4,320.2ZM510.2,305.4 509.6,306.2 508.5,306.6 507.7,306.2 508.5,305.7ZM549.2,258.1 548.6,258.8 544.0,259.5 540.6,260.1 537.7,261.1 536.0,262.3 534.8,263.4 534.3,264.3 536.3,265.2 534.3,265.4 532.2,265.1 530.8,264.4 529.7,264.0 531.4,262.6 533.1,261.7 534.3,260.3 536.6,259.6 540.6,258.8 545.2,258.3ZM584.1,255.7 581.9,256.0 579.6,255.5 581.8,254.3 577.3,255.0 575.0,254.6 579.6,253.4 581.8,254.2 582.4,253.9 585.3,253.2 588.7,254.0 591.0,255.4 588.7,256.5 585.3,256.7ZM525.1,254.4 524.5,253.8 529.1,253.7 528.5,254.4ZM669.0,396.6 667.8,396.7 667.0,397.2 666.7,398.1 666.3,398.9 665.2,399.6 663.8,399.7 662.7,399.3 661.5,399.0 661.9,398.2 663.0,397.4 664.2,396.6 665.5,395.8 666.7,395.0 667.3,394.1 668.1,393.1 668.6,392.7 669.2,393.5 670.5,393.5 670.4,394.2 669.6,395.3 668.7,395.9ZM638.6,396.3 637.7,395.6 637.2,394.8 636.9,393.9 636.5,393.0 637.8,393.3 638.9,393.4 640.5,393.2 640.7,394.4 640.3,395.6 639.4,396.2ZM674.7,389.4 675.3,389.5 675.1,390.6 674.1,391.1 673.6,391.6 673.4,392.5 672.4,393.5 671.6,394.0 670.9,393.6 671.4,392.7 671.0,391.9 669.9,391.4 670.7,390.8 670.9,389.9 670.9,389.1 670.4,388.1 669.3,387.0 668.6,385.7 669.6,386.4 670.5,387.2 671.0,388.5 671.8,388.3 672.3,389.3 673.6,389.9ZM658.7,369.5 660.1,370.1 661.5,371.1 662.1,371.9 661.3,371.9 659.8,370.9 658.8,369.9ZM674.1,367.2 673.9,366.2 675.1,366.2 675.4,366.9ZM675.6,365.8 675.5,365.4 676.9,365.0 676.8,365.3ZM662.8,365.3 662.3,365.0 662.3,364.6 663.0,365.0ZM661.6,364.2 661.6,363.5 662.3,363.8 662.2,364.4ZM653.6,357.4 653.5,357.0 655.0,357.3 654.6,357.6ZM654.6,356.3 654.8,355.9 655.6,357.0 655.2,357.2ZM652.4,355.4 652.4,355.0 653.8,355.8 653.5,356.0ZM650.1,354.4 650.1,354.1 651.2,354.7 651.0,355.0ZM649.4,354.1 648.7,354.0 648.0,353.1 647.9,352.5 648.7,353.1ZM644.3,352.7 643.2,353.4 642.0,353.5 640.8,353.2 640.7,352.7 642.0,352.5 643.2,352.5 644.1,351.8 644.6,351.1 645.2,351.2 645.1,352.0ZM643.4,349.3 644.7,349.9 645.8,350.9 646.0,351.7 645.5,351.2 644.3,350.2 643.4,349.6ZM619.1,349.5 620.6,350.1 620.3,350.7 618.5,350.3 617.4,350.3 617.4,349.7ZM616.8,344.2 617.4,343.8 618.2,344.6 617.6,345.7 618.0,346.9 617.3,346.6 616.9,345.4ZM619.9,310.4 620.0,309.4 619.3,308.8 619.5,308.2 620.3,307.4 621.1,307.6 621.7,308.4 621.4,309.6 621.1,310.4 620.5,310.8ZM622.5,308.5 622.3,307.9 623.1,307.2 624.5,307.0 625.1,307.6 624.5,308.1 623.5,308.1 623.0,308.7ZM631.8,304.8 632.1,305.4 631.1,305.9 630.9,305.6 630.2,305.9 629.8,306.5 629.1,306.6 627.9,306.6 627.6,306.2 627.5,306.9 626.9,307.2 626.3,307.9 625.6,307.6 625.6,306.9 624.8,306.5 623.7,306.9 622.3,307.1 620.8,307.3 620.7,306.9 621.7,306.4 622.8,305.6 624.3,305.5 625.8,305.5 626.6,305.4 627.4,304.2 627.5,303.4 628.1,303.4 627.9,304.1 629.4,303.5 630.3,302.5 631.0,301.6 631.1,300.4 631.1,299.6 631.6,299.1 632.6,298.8 632.9,299.9 633.4,300.9 632.9,302.2 632.3,302.5 632.3,303.9ZM636.1,295.9 637.2,295.5 637.5,296.7 636.1,297.1 634.9,298.2 633.2,297.5 632.3,297.8 632.1,298.4 631.1,298.7 630.9,297.6 631.6,296.7 632.8,296.7 633.1,295.3 633.3,294.1 634.6,295.3ZM634.4,291.3 635.0,292.6 635.2,293.3 634.4,292.9 633.4,293.6 633.4,291.8 633.7,290.1 633.6,288.4 633.2,286.9 633.3,285.3 633.4,284.1 634.4,284.2 634.8,285.5 634.9,287.3 635.5,288.8 636.3,290.1 634.8,289.8ZM675.6,265.1 675.3,264.7 677.0,264.3 677.0,265.0ZM631.7,262.2 631.1,261.6 633.4,261.6 635.2,262.3ZM643.2,260.3 640.3,260.5 638.0,260.4 638.0,260.0 641.5,260.0ZM627.7,260.0 630.0,259.1 633.4,259.2 636.9,259.7 635.7,260.3 631.1,260.5 628.3,260.4Z"/><path fill="#0c6e64" stroke="#9fe6dc" stroke-opacity=".6" stroke-width=".3" stroke-linejoin="round" d="M329.1,291.0 330.1,291.8 330.3,290.9 329.9,290.1 344.5,290.1 361.5,290.1 361.5,289.7 362.2,290.4 364.6,290.7 366.6,291.0 368.0,291.3 369.3,290.9 371.5,291.7 373.4,292.5 373.9,293.1 374.9,293.6 376.1,294.4 376.4,296.3 376.1,297.3 375.4,298.0 376.1,298.5 377.8,297.9 380.1,297.2 380.1,296.5 381.2,296.3 383.0,296.0 384.1,295.1 385.0,294.7 388.7,294.7 389.5,294.3 390.1,293.6 390.4,292.8 391.3,292.0 392.5,292.1 392.9,293.0 392.9,293.9 393.5,294.5 393.8,294.8 392.1,295.5 390.4,296.1 389.6,297.1 389.5,297.8 390.2,298.2 389.7,298.6 388.7,298.8 387.0,299.2 388.1,299.3 385.8,299.8 385.7,300.9 384.7,301.7 384.4,302.4 383.5,303.7 383.2,302.2 383.0,303.3 383.5,304.0 383.9,305.5 383.0,306.4 381.6,307.2 380.3,307.7 379.5,308.5 378.0,309.4 377.4,310.4 377.3,311.3 377.8,312.7 378.4,313.9 378.8,315.6 378.7,317.0 378.0,317.4 377.4,316.7 376.8,315.8 375.8,314.5 375.8,313.2 374.9,312.1 374.0,311.9 372.9,312.3 371.7,311.4 370.0,311.6 368.6,311.6 367.7,311.9 368.3,312.9 366.9,312.8 365.8,312.5 364.0,312.3 362.3,312.5 361.4,313.2 360.0,313.9 359.1,314.8 359.1,316.3 359.2,316.6 357.2,315.9 356.4,314.5 355.1,313.1 353.7,312.1 352.3,313.1 350.9,312.3 350.3,311.1 348.6,309.8 346.6,309.8 346.6,310.4 343.4,310.4 339.0,309.0 336.4,309.0 335.9,308.0 334.8,307.3 333.7,307.0 332.5,306.7 332.3,305.9 331.0,304.7 330.8,303.9 330.2,303.1 329.6,302.4 328.7,301.2 328.2,300.1 328.4,298.7 328.0,297.2 328.4,295.9 328.5,293.3 327.8,291.8 327.7,290.9 328.0,290.9ZM329.0,290.9 328.9,290.9 329.0,290.9ZM398.4,295.1 396.7,295.9 395.6,296.3 394.8,295.9 395.2,295.2 395.6,294.9 398.8,294.9ZM374.0,321.1 374.0,321.1 374.6,321.0ZM390.4,298.4 390.2,298.2 390.4,298.0Z"/><path fill="#0c6e64" stroke="#9fe6dc" stroke-opacity=".6" stroke-width=".3" stroke-linejoin="round" d="M311.1,277.4 313.0,278.7 314.2,278.2 315.3,277.7 316.1,278.4 317.6,279.1 319.3,280.8 321.6,282.1 321.5,283.0 321.2,283.5 321.0,283.2 319.6,282.7 319.3,281.5 317.8,280.6 317.0,279.5 315.5,278.3 315.3,279.4 314.2,279.6 312.7,279.0 310.7,278.0 308.4,277.5 306.1,277.4 304.4,277.1 302.7,276.5 301.0,276.5 300.6,277.5 299.3,277.7 297.5,278.3 296.6,278.2 297.1,276.9 298.7,276.1 297.0,276.4 295.5,277.2 294.3,278.2 293.9,279.0 292.4,280.0 291.2,281.0 289.5,281.6 287.8,282.4 285.9,283.0 284.0,283.5 281.8,283.8 283.2,283.1 284.9,282.3 286.7,282.1 288.4,281.0 289.7,280.3 290.3,279.0 288.9,278.9 287.2,279.0 285.2,279.0 284.9,277.7 283.2,277.5 281.5,276.6 280.3,275.6 281.5,274.4 282.1,274.0 284.4,273.5 286.1,273.4 286.3,272.2 284.4,272.4 282.1,272.4 280.0,272.2 278.1,271.1 279.8,270.4 282.1,270.1 283.2,270.4 285.2,270.3 284.4,269.5 282.6,268.8 280.9,268.2 279.4,268.0 283.2,267.2 285.5,265.7 291.2,264.6 296.4,265.1 301.0,265.6 305.6,266.1 309.0,266.5 309.0,277.2ZM280.0,284.4 279.8,285.0 277.8,285.3 278.1,284.9ZM295.7,279.6 296.2,280.5 294.3,281.2 293.4,280.4ZM280.6,277.2 280.6,277.7 279.0,277.7 278.9,277.3ZM276.9,273.7 277.1,274.1 274.0,274.0 273.8,273.5Z"/><path fill="#15a797" stroke="#9fe6dc" stroke-opacity=".6" stroke-width=".3" stroke-linejoin="round" d="M321.6,282.1 319.3,280.8 317.6,279.1 316.1,278.4 315.3,277.7 314.2,278.2 313.0,278.7 311.1,277.4 309.0,277.2 309.0,266.5 311.9,267.0 315.3,266.7 318.2,266.6 320.5,266.1 323.3,265.5 324.5,265.7 326.8,266.6 328.5,266.7 329.6,266.3 332.5,266.6 336.5,267.2 338.8,267.4 340.0,268.1 338.8,268.5 342.3,268.7 345.1,268.6 346.8,268.1 346.3,269.1 347.4,269.6 348.0,268.6 350.3,268.1 352.6,268.5 354.9,268.7 357.7,268.6 358.9,267.8 360.6,268.1 360.6,269.1 361.4,268.3 362.9,267.4 362.3,266.6 360.0,265.7 360.6,264.6 362.1,263.8 364.0,264.3 364.6,266.1 366.3,266.6 366.9,267.8 368.0,267.0 369.8,267.5 369.8,268.9 371.5,268.6 372.6,267.2 372.9,266.3 376.1,266.4 377.2,267.2 377.2,268.3 376.6,269.5 374.9,270.3 373.2,270.1 372.1,270.6 371.9,271.1 373.2,270.6 374.4,271.2 376.6,272.4 378.6,272.9 377.8,273.5 375.5,274.3 372.6,273.8 370.7,272.9 372.3,272.0 371.7,271.4 371.5,272.0 369.8,272.7 367.5,272.9 366.6,273.7 364.6,274.5 362.9,275.8 362.1,277.3 362.3,278.8 364.0,279.1 364.6,280.7 366.9,280.8 369.2,281.3 370.9,282.2 373.2,282.9 376.1,283.0 376.4,284.4 376.4,285.7 377.4,286.5 378.4,287.5 379.5,287.4 380.3,286.3 380.1,284.4 379.3,283.5 381.8,282.6 382.8,281.2 382.4,279.8 380.8,278.9 381.8,277.5 381.2,275.8 381.7,274.6 384.7,274.9 387.0,275.2 388.7,276.0 390.7,276.4 391.0,278.1 392.1,279.2 394.4,279.0 396.1,277.6 396.6,277.1 397.9,278.7 399.6,280.0 400.1,281.5 401.9,282.7 404.2,283.6 405.3,284.7 406.7,285.3 406.7,286.7 405.3,287.4 403.2,287.8 401.9,288.6 399.6,288.6 396.7,288.6 394.4,288.8 393.5,289.7 391.5,290.6 390.1,292.1 389.5,292.5 390.7,291.6 392.7,290.6 394.4,290.0 396.1,289.9 396.9,290.5 395.8,291.3 396.1,292.2 396.4,293.2 397.9,293.7 399.8,293.8 400.7,292.4 401.6,292.8 402.0,293.7 400.7,294.4 398.4,295.1 397.0,295.7 395.2,295.3 395.2,295.2 396.7,294.4 395.0,294.5 393.8,294.8 393.5,294.5 392.9,293.9 392.9,293.0 392.5,292.1 391.3,292.0 390.4,292.8 390.1,293.6 389.5,294.3 388.7,294.7 385.0,294.7 384.1,295.1 383.0,296.0 381.2,296.3 380.1,296.5 380.1,297.2 377.8,297.9 376.1,298.5 375.4,298.0 376.1,297.3 376.4,296.3 376.1,294.4 374.9,293.6 373.9,293.1 373.4,292.5 371.5,291.7 369.3,290.9 368.0,291.3 366.6,291.0 364.6,290.7 362.2,290.4 361.5,289.7 361.5,290.1 344.5,290.1 329.9,290.1 329.3,289.7 327.9,289.0 326.2,288.3 324.5,287.8 324.1,286.5 323.0,285.3 321.6,284.2 321.2,283.5 321.5,283.0ZM327.7,290.8 328.0,290.9 327.7,290.9ZM327.3,290.5 325.3,289.4 323.6,288.1 325.6,288.4 327.3,288.9 329.1,290.5 329.0,290.9 328.9,290.9ZM319.6,284.4 320.2,286.3 319.0,285.5 318.2,284.3ZM359.4,267.7 356.6,267.0 358.3,266.1 360.6,266.2 361.2,267.2ZM326.8,263.5 328.5,261.8 331.4,260.9 335.9,261.2 338.5,262.3 337.5,262.6 340.0,262.5 342.3,263.2 344.5,262.7 348.0,262.3 350.3,262.6 349.7,263.8 350.9,264.7 354.3,265.8 353.1,266.6 354.3,267.2 351.4,267.5 348.6,267.2 345.7,267.5 340.5,267.8 337.7,267.2 336.5,266.4 335.9,265.8 338.8,265.5 341.1,265.7 337.1,264.6 335.1,263.3 334.8,263.4 332.5,264.4 329.6,264.8 327.3,263.9ZM354.9,261.8 358.3,261.7 359.7,262.6 359.4,264.1 356.0,264.3 353.1,263.5 353.7,262.6ZM364.0,261.2 367.5,261.6 366.9,263.0 363.5,263.9 360.9,263.4 361.2,261.8ZM336.5,260.1 337.7,258.9 342.3,259.7 345.7,258.6 349.1,259.2 349.7,260.1 346.8,260.5 343.4,260.9 340.0,260.8ZM378.4,259.5 379.5,260.3 378.9,260.8 374.4,260.9 369.8,260.9 365.8,260.7 364.6,259.4 362.9,258.6 367.5,258.5 368.6,259.6 373.2,259.5ZM356.0,260.3 350.9,260.0 353.7,258.6 358.3,258.6 358.9,260.0ZM333.1,259.4 329.6,259.2 334.2,257.7 337.7,257.5 337.1,258.6ZM350.9,257.1 350.3,256.3 357.2,255.7 360.0,256.5 354.9,257.2ZM367.5,256.5 364.0,255.5 360.6,254.6 362.3,253.2 366.3,253.8 370.3,254.4 369.2,255.4 370.3,256.2ZM409.7,290.6 410.1,292.1 409.3,292.9 408.2,292.2 406.7,292.5 404.7,291.7 402.7,291.6 403.6,290.1 404.7,288.4 406.2,287.1 406.9,287.4 405.9,289.0 407.0,289.1 408.7,289.6ZM399.6,289.7 399.0,290.0 397.1,289.4 396.7,289.1ZM395.0,275.2 392.1,274.9 388.7,273.8 387.0,272.7 384.7,272.5 381.5,272.5 381.2,271.4 385.2,271.2 386.0,270.1 387.2,268.7 385.2,267.8 383.0,267.2 381.2,266.3 379.5,266.2 376.1,266.1 373.4,266.1 370.9,265.7 368.6,264.9 367.7,263.8 368.3,262.2 370.3,261.7 373.2,262.2 372.6,263.8 373.8,264.3 373.2,262.8 376.1,261.8 378.4,262.4 381.2,262.7 383.5,263.1 385.2,263.9 388.1,264.3 389.3,265.1 392.1,265.7 393.3,266.9 392.1,267.7 395.0,268.3 397.9,269.3 400.1,269.9 398.4,271.6 396.1,270.9 393.3,270.3 392.7,271.4 395.6,272.7 396.4,274.1 394.4,273.8 392.1,273.3ZM375.5,254.0 369.8,254.0 365.8,253.1 369.8,252.2 376.6,251.4 384.7,251.0 392.7,251.1 399.6,251.7 396.7,252.9 392.7,253.7 389.3,254.9 384.7,255.4 383.0,256.7 381.2,257.7 381.8,258.7 378.4,258.9 374.4,258.7 368.6,258.6 369.8,257.5 373.2,257.1 370.3,256.5 373.2,255.7 371.5,254.6Z"/><path fill="#15a797" stroke="#9fe6dc" stroke-opacity=".6" stroke-width=".3" stroke-linejoin="round" d="M409.5,383.8 408.5,382.8 407.0,382.1 406.5,381.6 404.6,380.9 406.7,378.7 409.0,377.5 409.1,376.7 408.1,375.6 408.4,373.9 407.1,373.8 406.7,371.9 404.3,371.6 404.0,369.2 404.6,367.2 403.8,366.2 403.8,365.0 401.6,364.9 401.3,362.1 399.6,361.5 397.9,360.7 395.8,360.1 395.8,357.8 394.4,357.6 392.4,358.9 391.0,358.9 389.7,358.9 389.7,357.3 387.8,357.5 387.0,356.8 386.0,354.7 387.2,352.3 388.7,351.5 390.4,351.1 391.1,347.8 390.4,346.3 391.0,345.5 390.6,344.4 393.5,344.0 394.1,344.9 395.6,345.4 397.9,343.8 397.1,343.4 396.9,341.6 398.4,341.7 400.1,341.4 401.1,340.3 401.9,340.3 402.0,341.7 402.1,344.6 403.6,344.8 405.3,344.1 406.5,344.0 408.2,343.7 410.5,343.4 411.5,341.4 411.5,341.3 412.0,341.7 412.5,343.7 413.3,344.4 413.3,345.4 412.5,346.1 411.8,346.8 412.8,347.4 413.9,346.5 415.0,346.6 415.2,347.8 415.9,347.0 417.3,347.4 419.1,348.0 419.6,348.9 419.9,349.6 420.8,349.1 422.5,349.5 424.2,349.5 425.4,350.0 426.5,350.5 427.9,351.7 428.8,352.1 430.1,352.3 430.5,353.5 430.8,354.7 430.5,356.4 429.6,357.5 428.5,358.7 427.7,359.8 426.7,361.1 425.9,362.1 425.9,363.5 425.9,365.2 425.6,366.7 425.1,367.9 424.8,369.2 423.9,370.7 423.6,371.5 422.5,372.6 421.0,372.7 419.5,373.0 418.6,373.6 417.5,373.9 415.9,375.0 415.0,375.9 414.9,377.3 414.8,378.9 413.8,379.9 413.0,381.3 411.8,382.6 410.8,383.3 410.1,384.4 409.4,385.0Z"/><path fill="#0c6e64" stroke="#9fe6dc" stroke-opacity=".6" stroke-width=".3" stroke-linejoin="round" d="M552.0,318.2 551.2,316.7 550.9,314.8 553.2,313.6 554.9,311.9 556.1,310.8 556.2,309.0 555.5,308.2 555.3,306.7 556.4,305.9 558.9,305.6 559.8,305.7 561.0,306.9 561.2,308.5 560.9,310.2 562.4,311.2 563.5,311.7 562.5,313.1 562.8,313.5 564.4,314.3 565.8,314.9 568.1,315.7 569.8,315.9 571.6,315.9 571.6,314.3 572.5,315.0 572.7,315.6 574.4,315.6 576.1,315.6 576.1,314.4 577.3,313.6 579.0,312.7 580.7,312.6 582.2,313.9 580.9,315.0 579.8,315.9 579.2,317.4 578.4,318.9 577.6,318.8 577.5,320.8 576.8,321.2 576.5,319.9 575.3,319.7 575.9,318.6 576.5,317.6 573.8,317.3 573.6,316.5 572.1,316.0 571.6,316.7 572.5,317.6 571.8,318.4 572.5,319.9 572.6,321.3 571.9,321.5 570.6,321.7 570.3,322.5 569.8,323.4 568.4,323.9 567.3,325.1 566.1,326.1 565.0,327.2 563.9,327.8 563.0,328.3 562.5,329.3 562.6,330.8 562.7,332.0 562.2,333.1 562.2,334.5 561.4,334.8 561.2,335.6 560.5,336.0 560.1,336.7 559.5,337.0 558.7,336.3 558.1,335.2 557.5,333.7 556.9,332.5 556.4,331.4 555.9,329.9 555.4,328.5 554.8,327.4 554.3,325.9 554.1,324.4 554.1,323.0 554.0,322.0 553.6,321.3 553.4,322.1 552.3,322.5 551.2,322.2 550.1,321.3 549.8,320.7 551.1,320.4 551.2,319.9 550.0,320.2 549.2,319.6 548.9,319.2 549.5,318.4Z"/><path fill="#10746a" stroke="#9fe6dc" stroke-opacity=".6" stroke-width=".3" stroke-linejoin="round" d="M572.5,319.9 571.8,318.4 572.5,317.6 571.6,316.7 572.1,316.0 573.6,316.5 573.8,317.3 576.5,317.6 575.9,318.6 575.3,319.7 576.5,319.9 576.8,321.2 576.5,322.3 576.1,321.7 575.9,320.6 575.0,320.4 574.4,320.7 573.8,321.2 572.7,321.3 572.6,321.3Z"/><path fill="#15a797" stroke="#9fe6dc" stroke-opacity=".6" stroke-width=".3" stroke-linejoin="round" d="M637.8,393.3 638.9,393.4 640.5,393.2 640.7,394.4 640.3,395.6 639.4,396.2 638.6,396.3 637.7,395.6 637.2,394.8 636.9,393.9 636.5,393.0ZM613.4,364.3 614.2,363.2 615.1,362.6 616.0,362.1 617.0,362.7 617.7,363.4 619.1,363.4 619.2,362.3 619.9,361.4 620.4,360.6 621.4,360.3 622.5,360.2 622.7,359.4 623.8,359.8 625.4,360.3 626.6,360.4 627.5,360.3 626.9,361.5 626.3,362.6 626.0,363.4 627.1,364.3 628.3,364.9 629.4,365.6 630.3,366.2 631.4,366.6 632.2,366.0 632.6,364.9 633.0,363.5 633.0,362.1 633.2,360.6 633.4,359.1 634.0,358.6 634.5,359.5 634.9,360.6 635.3,362.1 636.1,362.7 637.1,363.4 637.3,364.6 638.0,366.1 638.4,367.9 639.5,368.5 640.9,369.5 641.7,370.6 642.4,371.9 643.5,372.9 644.3,373.9 645.7,375.2 646.3,376.3 646.3,377.6 646.7,379.1 646.3,380.7 645.9,382.4 645.2,383.7 644.3,384.7 643.8,385.6 643.2,387.0 642.6,388.5 642.5,389.3 640.9,389.6 639.7,390.1 638.5,391.1 637.5,390.4 636.6,390.1 635.2,390.8 633.8,390.3 632.3,390.0 631.1,389.2 630.8,388.1 630.2,387.2 629.1,387.1 629.4,386.2 628.9,384.9 628.6,383.8 628.2,384.7 627.7,385.3 626.8,386.3 626.0,386.2 625.4,385.0 624.5,384.1 624.0,383.3 622.5,383.0 621.2,382.4 619.7,382.5 618.5,382.6 616.8,383.2 615.1,383.3 613.7,383.9 612.8,384.4 612.2,385.2 610.5,385.2 608.8,385.2 607.6,385.7 605.9,386.4 604.8,386.4 603.6,386.2 602.6,385.6 602.5,384.7 603.3,384.1 603.3,383.0 602.9,381.8 602.5,380.7 602.3,379.5 601.6,378.4 600.9,377.0 601.0,376.1 600.7,375.5 600.8,374.4 601.0,373.2 601.0,372.1 601.6,371.3 602.8,370.4 604.2,370.0 605.7,369.8 607.1,369.2 608.6,369.0 609.7,368.4 610.7,366.9 610.9,366.0 611.7,365.2 612.5,365.7 612.6,364.9Z"/><path fill="#0f6b62" stroke="#9fe6dc" stroke-opacity=".6" stroke-width=".3" stroke-linejoin="round" d="M585.4,338.8 586.4,339.8 587.4,339.7 587.7,339.1 587.8,339.1 588.0,339.3 588.8,340.1 589.2,341.1 589.2,342.4 589.4,343.3 590.0,344.4 590.0,344.6 589.6,344.6 589.5,344.8 589.3,344.8 588.2,344.0 586.9,343.1 586.3,341.9 586.0,341.0 585.6,340.0 585.5,339.0 585.4,338.8ZM584.7,342.9 584.7,342.7 585.3,343.1 585.4,343.2Z"/><path fill="#0f6b62" stroke="#9fe6dc" stroke-opacity=".6" stroke-width=".3" stroke-linejoin="round" d="M605.4,341.4 603.4,341.4 603.1,342.3 602.5,343.4 601.9,344.6 600.2,344.6 599.0,344.7 597.9,345.2 596.8,345.2 596.3,344.1 596.2,344.1 596.3,344.0 597.3,344.4 598.1,344.6 598.2,343.4 599.6,342.9 600.5,342.3 601.3,341.1 602.5,340.6 603.2,339.9 603.9,339.1 604.5,338.3 605.1,338.8 605.7,339.4 606.5,339.9 607.3,340.3 606.3,341.1 605.7,341.4Z"/><path fill="#14776d" stroke="#9fe6dc" stroke-opacity=".6" stroke-width=".3" stroke-linejoin="round" d="M607.8,333.3 607.1,334.5 605.9,335.8 605.0,336.7 605.6,335.9 606.7,334.6 607.3,333.6 607.5,333.3ZM615.6,338.3 615.3,339.1 614.6,339.4 614.4,338.5 614.3,339.8 613.1,339.2 612.8,338.3 612.2,337.5 611.4,337.7 610.7,338.4 610.5,338.3 610.7,337.4 611.7,336.6 612.5,336.4 613.1,336.6 613.7,336.0 614.5,335.1 615.3,335.6 615.7,337.1ZM612.1,334.3 612.8,333.5 612.8,334.5 612.2,335.3ZM610.5,332.8 611.4,333.1 611.9,333.1 611.9,333.9 612.1,335.1 611.9,335.9 611.1,335.3 611.2,334.3 610.5,334.1ZM614.3,332.0 614.8,333.3 614.2,334.3 614.2,334.6 613.7,334.6 613.3,333.3 613.8,333.0 613.1,332.0ZM609.0,331.7 608.7,330.9 609.6,330.9 609.9,331.7 609.5,332.2ZM612.6,330.5 612.9,331.4 612.8,331.9 612.0,331.4 611.4,330.7 610.5,330.5 609.4,330.6 609.0,330.4 609.2,329.6 608.6,329.3 608.2,328.2 608.3,327.7 608.7,326.2 608.9,325.1 609.9,325.0 610.7,325.1 610.9,326.5 611.1,327.4 610.1,328.2 610.2,329.3 610.9,330.0 611.7,330.3Z"/><path fill="#22a59a" stroke="#9fe6dc" stroke-opacity=".6" stroke-width=".3" stroke-linejoin="round" d="M461.2,298.0 463.1,298.3 463.5,298.6 462.7,299.3 462.7,300.2 462.6,300.8 462.1,300.9 462.6,301.6 462.3,302.3 462.6,302.5 462.1,303.3 462.2,303.8 462.2,303.8 461.7,303.9 460.4,303.9 460.7,302.5 459.9,301.9 460.1,301.0 460.6,299.9 460.7,298.7 460.6,298.3Z"/><path fill="#19958a" stroke="#9fe6dc" stroke-opacity=".6" stroke-width=".3" stroke-linejoin="round" d="M469.8,297.1 471.5,297.2 472.7,297.7 474.3,297.7 474.3,298.3 473.2,299.0 471.8,299.3 471.3,299.8 470.6,300.6 470.3,301.1 470.9,301.8 470.1,302.4 469.8,303.2 468.8,303.7 468.1,304.2 466.6,304.2 465.6,304.2 464.5,304.9 463.4,304.3 462.7,303.7 462.2,303.8 462.2,303.8 462.1,303.3 462.6,302.5 462.3,302.3 462.6,301.6 462.1,300.9 462.6,300.8 462.7,300.2 462.7,299.3 463.5,298.6 463.1,298.3 461.2,298.0 460.6,298.3 460.4,297.8 460.0,297.0 461.2,296.2 462.6,296.3 464.3,296.3 466.1,296.5 467.4,296.5 468.6,296.5 469.0,296.9ZM474.3,300.6 474.5,301.0 474.1,301.2 473.4,300.9Z"/><path fill="#14867d" stroke="#9fe6dc" stroke-opacity=".6" stroke-width=".3" stroke-linejoin="round" d="M466.8,287.6 472.3,287.6 471.0,288.1 469.5,288.2 467.8,288.3 466.6,288.5 465.5,288.6 464.1,288.9 465.1,288.3 465.7,287.6ZM474.1,288.1 475.5,289.0 476.2,289.0 477.3,289.6 478.0,289.6 480.1,290.1 479.4,291.3 479.4,291.7 478.7,292.0 477.5,293.1 477.6,293.3 478.4,293.6 478.7,293.7 478.4,294.5 478.7,295.5 479.2,296.1 478.2,296.8 477.0,296.8 475.8,296.5 474.7,296.7 474.1,297.1 474.3,297.7 472.7,297.7 471.5,297.2 469.8,297.1 469.0,296.9 468.6,296.5 469.2,295.5 469.4,294.1 469.2,293.3 468.2,292.5 467.8,292.0 466.6,291.6 465.5,291.4 465.3,290.8 466.6,290.4 467.8,290.6 468.8,290.5 468.6,289.3 469.3,289.6 470.4,289.8 470.9,289.4 472.1,288.9 472.5,288.1 473.5,287.7ZM463.8,296.5 463.8,296.3 464.3,296.3 466.1,296.5Z"/><path fill="#14867d" stroke="#9fe6dc" stroke-opacity=".6" stroke-width=".3" stroke-linejoin="round" d="M481.2,298.8 480.6,298.5 480.5,297.7 481.4,297.0 481.5,298.2Z"/><path fill="#24a093" stroke="#9fe6dc" stroke-opacity=".6" stroke-width=".3" stroke-linejoin="round" d="M474.4,287.4 475.6,287.4 476.4,287.3 477.4,287.7 477.2,288.1 477.8,288.3 477.6,288.9 477.3,289.6 476.2,289.0 475.5,289.0 474.1,288.1 473.5,287.7Z"/><path fill="#24a093" stroke="#9fe6dc" stroke-opacity=".6" stroke-width=".3" stroke-linejoin="round" d="M478.9,285.2 478.7,286.2 478.3,286.8 477.5,286.9 477.6,287.8 477.2,288.1 477.4,287.7 476.4,287.3 475.6,287.4 474.4,287.4 475.2,286.8 475.8,286.2 476.2,285.5 477.0,285.2 477.9,285.0 478.8,285.0 478.9,285.0Z"/><path fill="#138079" stroke="#9fe6dc" stroke-opacity=".6" stroke-width=".3" stroke-linejoin="round" d="M487.2,285.3 486.8,285.8 487.5,286.7 487.8,287.8 487.0,287.8 484.8,288.6 485.0,289.2 486.5,290.4 485.6,290.9 485.6,291.8 484.6,291.6 482.7,291.8 481.7,291.8 480.4,291.6 479.4,291.7 479.4,291.3 480.1,290.1 478.0,289.6 477.3,289.6 477.6,288.9 477.8,288.3 477.2,288.1 477.6,287.8 477.5,286.9 478.3,286.8 478.7,286.2 478.9,285.2 478.9,285.0 479.8,284.9 480.4,284.5 480.9,284.4 480.6,283.5 480.5,283.4 481.9,283.4 481.9,283.5 483.0,284.1 483.3,284.4 484.4,284.2 485.6,283.9 486.9,284.5ZM483.9,283.4 483.8,283.4 483.8,283.4Z"/><path fill="#27a89c" stroke="#9fe6dc" stroke-opacity=".6" stroke-width=".3" stroke-linejoin="round" d="M477.5,293.1 478.7,292.0 479.4,291.7 480.4,291.6 481.7,291.8 482.6,292.4 482.6,292.9 481.5,293.1 481.0,293.8 480.3,293.1 478.7,293.7 478.4,293.6 477.6,293.3Z"/><path fill="#27a89c" stroke="#9fe6dc" stroke-opacity=".6" stroke-width=".3" stroke-linejoin="round" d="M482.7,291.8 484.6,291.6 485.6,291.8 485.6,290.9 486.5,290.4 487.8,290.1 490.0,290.6 490.3,291.3 489.6,291.7 489.2,292.4 489.0,292.8 487.8,292.9 486.4,293.0 484.9,292.8 484.6,292.4 482.6,292.6 482.6,292.4 481.7,291.8Z"/><path fill="#117a71" stroke="#9fe6dc" stroke-opacity=".6" stroke-width=".3" stroke-linejoin="round" d="M478.4,294.5 478.7,293.7 480.3,293.1 481.0,293.8 481.5,293.1 482.6,292.9 482.6,292.6 484.6,292.4 484.9,292.8 486.4,293.0 486.4,294.0 486.3,294.1 486.4,293.9 485.6,293.9 484.8,294.4 484.9,295.3 485.1,295.9 486.1,296.3 486.7,297.5 487.6,298.0 488.8,298.3 489.2,298.4 489.0,298.8 490.1,299.3 491.3,299.8 491.9,300.3 491.6,300.7 491.1,300.1 490.1,299.9 489.7,300.7 490.3,301.6 489.7,302.0 489.1,302.9 488.6,302.7 488.9,302.0 489.2,301.5 488.8,300.4 487.8,300.2 487.2,299.8 486.7,299.5 485.6,299.1 484.8,298.5 483.9,297.8 482.8,297.1 482.5,296.4 482.1,295.9 481.0,295.4 479.9,296.0 479.2,296.1 478.7,295.5ZM485.0,302.7 486.1,302.5 487.8,302.5 488.5,302.5 488.1,303.5 488.0,304.2 487.0,304.1 485.6,303.4 484.9,303.1ZM481.8,299.5 481.8,301.0 481.2,301.5 480.4,301.7 480.3,301.0 480.1,299.5 481.2,299.0Z"/><path fill="#1c9e93" stroke="#9fe6dc" stroke-opacity=".6" stroke-width=".3" stroke-linejoin="round" d="M496.8,283.9 497.6,284.4 498.0,285.9 497.6,286.6 498.2,288.1 497.6,288.5 496.7,289.9 495.9,289.9 493.6,289.9 492.4,289.6 491.3,289.0 489.9,288.6 489.0,288.3 487.8,287.8 487.5,286.7 486.8,285.8 487.2,285.3 486.9,284.5 487.8,284.3 489.2,284.1 490.7,283.5 491.9,283.6 492.2,283.9 493.1,283.9Z"/><path fill="#168a80" stroke="#9fe6dc" stroke-opacity=".6" stroke-width=".3" stroke-linejoin="round" d="M494.7,293.2 495.9,291.7 496.9,291.3 499.2,291.6 501.1,290.9 502.9,292.5 503.0,294.1 504.6,294.3 504.7,294.3 504.6,294.5 503.9,295.1 503.6,295.9 503.4,296.2 501.6,295.7 499.9,296.3 496.9,296.1 496.4,295.3 495.2,294.9 495.3,294.5 493.9,293.5Z"/><path fill="#138279" stroke="#9fe6dc" stroke-opacity=".6" stroke-width=".3" stroke-linejoin="round" d="M480.5,283.4 480.1,282.7 480.1,281.5 480.2,281.0 481.5,280.7 482.7,280.2 482.6,281.2 483.0,281.8 482.3,282.1 482.0,282.7 482.9,282.7 483.0,283.1 482.1,283.2 481.9,282.8 481.9,282.9 481.9,283.5ZM485.6,281.8 485.6,282.8 485.1,281.9 484.8,281.1ZM485.1,282.3 484.8,283.1 483.8,283.4 483.3,283.0 483.3,282.4 484.4,282.0Z"/><path fill="#1ea398" stroke="#9fe6dc" stroke-opacity=".6" stroke-width=".3" stroke-linejoin="round" d="M485.0,276.9 484.6,275.8 485.3,275.2 484.4,273.5 486.7,272.6 487.3,271.2 488.4,270.3 489.6,268.9 491.3,267.8 493.9,267.2 495.3,267.5 497.6,268.5 497.8,270.1 498.4,270.9 497.0,270.9 495.9,271.2 495.1,272.1 494.2,273.2 492.4,273.8 491.3,274.6 490.6,275.5 490.4,276.6 491.3,277.2 492.2,277.9 491.3,278.7 489.9,279.2 489.7,280.4 489.2,281.5 488.8,282.0 487.3,282.1 486.9,282.7 485.7,282.8 485.5,282.7 485.2,282.1 485.2,281.9 485.0,281.7 484.8,281.0 484.2,280.0 483.5,278.9 483.4,278.8 483.5,278.8 484.2,277.9ZM495.0,274.5 495.9,273.5 496.2,273.3 495.1,275.2ZM492.4,279.9 492.2,280.6 491.5,281.0 491.5,279.9Z"/><path fill="#12807a" stroke="#9fe6dc" stroke-opacity=".6" stroke-width=".3" stroke-linejoin="round" d="M468.6,289.6 468.6,289.3 469.3,289.6ZM473.5,289.6 470.7,289.6 470.9,289.4 472.1,288.9 472.5,288.1 473.3,287.8ZM464.2,282.7 464.3,282.1 463.5,281.5 464.1,281.3 464.0,280.5 464.5,279.9 464.9,279.1 467.1,279.0 467.0,279.2 465.8,280.3 466.6,280.2 468.6,280.3 468.1,281.0 467.6,281.6 467.0,282.1 468.2,282.2 468.8,282.7 469.3,283.6 470.4,284.2 470.9,285.0 471.2,285.5 472.6,285.9 472.5,286.5 471.5,287.3 472.3,287.6 471.0,288.1 469.5,288.2 467.8,288.3 466.6,288.5 465.5,288.6 464.1,288.9 465.1,288.3 465.7,287.6 466.8,287.6 467.2,287.3 465.8,287.1 464.7,286.9 465.0,286.7 465.9,286.2 465.6,285.7 465.6,285.2 467.1,285.1 467.3,284.6 467.0,283.8 466.3,283.4 464.9,283.4 465.1,282.6 464.3,282.8ZM463.4,286.2 463.3,286.5 463.2,286.5Z"/><path fill="#12807a" stroke="#9fe6dc" stroke-opacity=".6" stroke-width=".3" stroke-linejoin="round" d="M463.8,284.3 463.4,284.3 462.1,284.3 461.4,283.8 462.3,283.2 462.3,282.9 463.2,283.0 464.0,283.2 464.2,283.9 463.8,284.3ZM464.3,282.8 464.2,282.8 464.2,282.8Z"/></svg>
</body>
</html>
